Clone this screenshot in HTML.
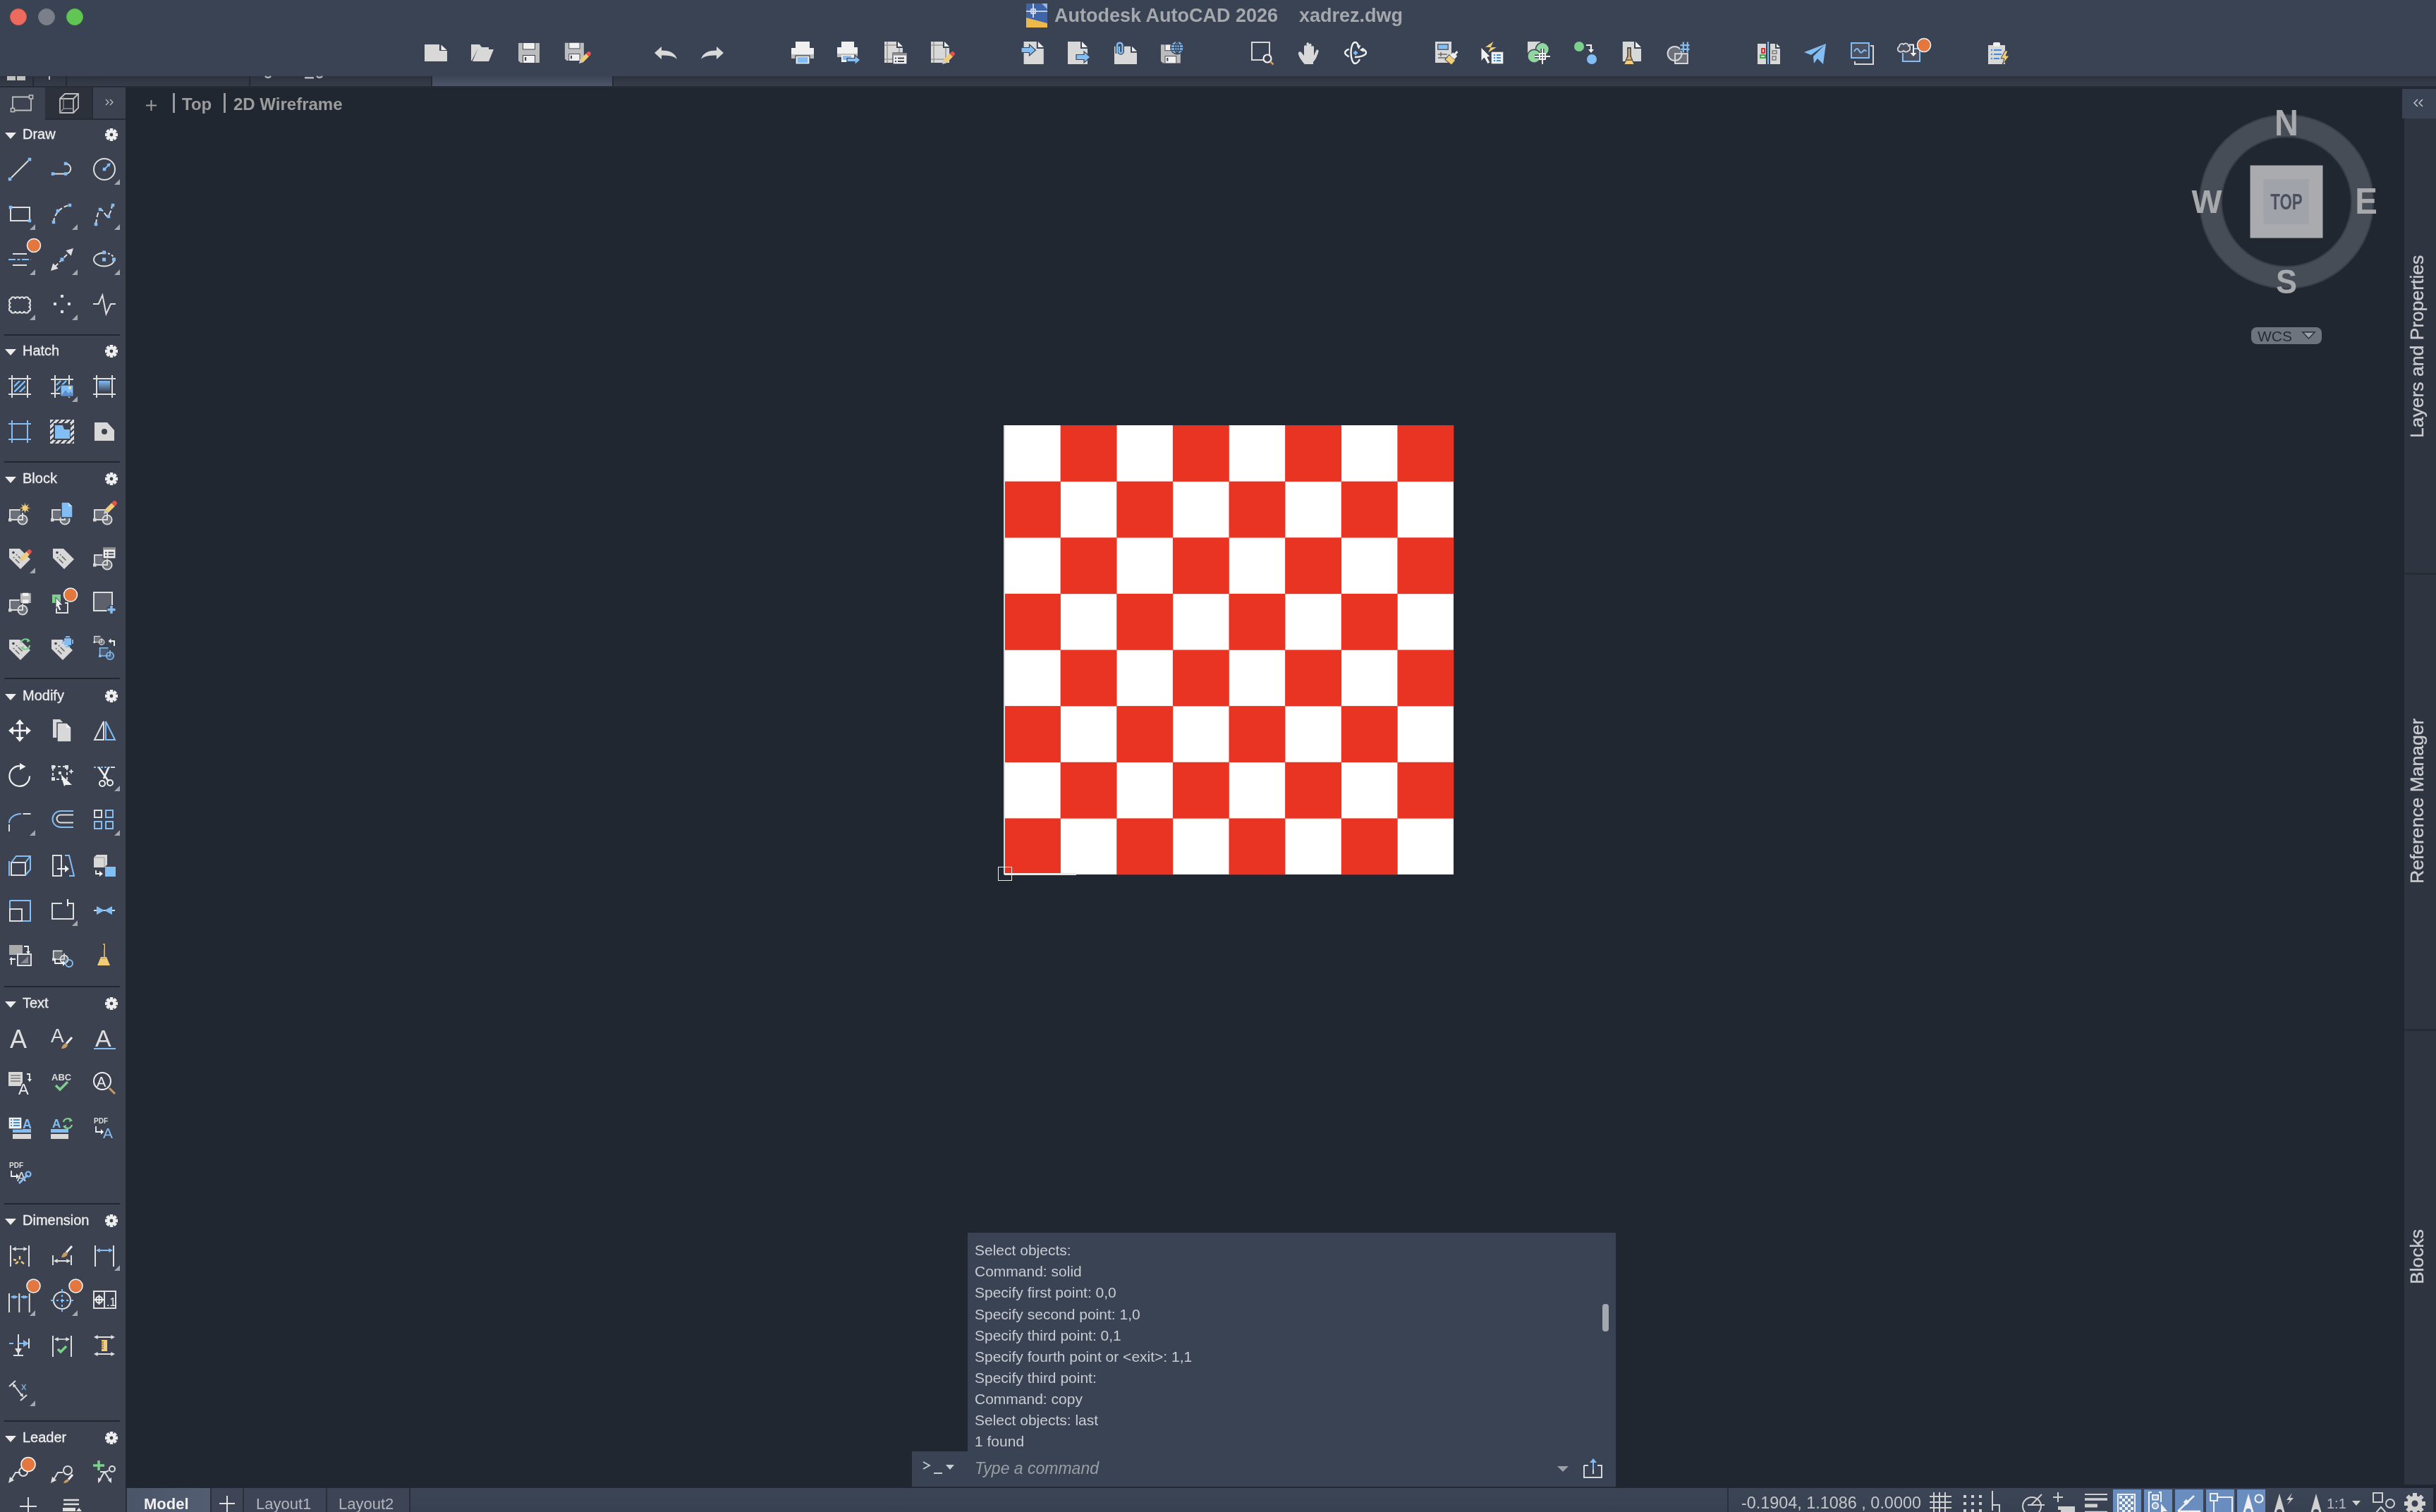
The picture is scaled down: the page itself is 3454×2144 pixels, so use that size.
<!DOCTYPE html>
<html><head><meta charset="utf-8"><style>
*{margin:0;padding:0;box-sizing:border-box}
html,body{width:3454px;height:2144px;overflow:hidden;background:#212730;font-family:"Liberation Sans",sans-serif}
body{will-change:transform}
.a{position:absolute}
svg.a{overflow:visible}
.tl{width:24px;height:24px;border-radius:50%;top:12px}
.hdr{color:#ececec;font-size:20px;-webkit-text-stroke:0.35px #ececec;left:32px;height:24px;line-height:24px;white-space:nowrap}
.tri{left:7px;width:0;height:0;border-left:8px solid transparent;border-right:8px solid transparent;border-top:9px solid #ececec}
.sep{left:6px;width:164px;height:2px;background:#22272f}
.vt{color:#c9cbcf;font-size:26.5px;-webkit-text-stroke:0.4px #c9cbcf;white-space:nowrap;transform-origin:0 0;transform:rotate(-90deg)}
.cl{left:1382px;color:#c9ccd3;font-size:21px;white-space:nowrap;height:30px;line-height:30px}
</style></head><body>
<div class="a" style="left:0;top:0;width:3454px;height:108px;background:#3a4353"></div>
<div class="a tl" style="left:14px;background:#ed6a5e;border:1px solid #d95a4e"></div>
<div class="a tl" style="left:54px;background:#7b7f89;border:1px solid #777b84"></div>
<div class="a tl" style="left:94px;background:#62c655;border:1px solid #55b848"></div>
<svg class="a" style="left:1455px;top:5px" width="30" height="34" viewBox="0 0 30 34"><rect x="0" y="0" width="30" height="34" fill="#3f64a8"/><path d="M22 0H30V8Z" fill="#9bb6e0"/><path d="M0 20L30 28V34H0Z" fill="#efb84a"/><path d="M10 0V20M0 11H30" stroke="#e8eef8" stroke-width="1.6"/><rect x="7" y="8" width="6" height="6" fill="none" stroke="#e8eef8" stroke-width="1.4"/></svg>
<div class="a" style="left:1495px;top:7px;font-size:27px;font-weight:bold;color:#a5a8ad;white-space:nowrap;line-height:normal">Autodesk AutoCAD 2026</div>
<div class="a" style="left:1842px;top:7px;font-size:27px;font-weight:bold;color:#a5a8ad;white-space:nowrap;line-height:normal">xadrez.dwg</div>
<svg class="a" style="left:602.0px;top:59.0px" width="32" height="32" viewBox="0 0 32 32"><path d="M0 4H21V13H32V28H0Z" fill="#d8d8d8"/><path d="M23.5 4.5L31.5 12H23.5Z" fill="#f0f0f0"/></svg>
<svg class="a" style="left:668.0px;top:59.0px" width="32" height="32" viewBox="0 0 32 32"><path d="M0 4H12L15 8H25V11H9L1 27H0Z" fill="#d8d8d8"/><path d="M2 28L9 11H32L25 28Z" fill="#d8d8d8"/></svg>
<svg class="a" style="left:734.0px;top:58.5px" width="32" height="32" viewBox="0 0 32 32"><g transform="translate(0 0) scale(1.0)"><path d="M1 2H31V30H4L1 27Z" fill="#bcbcbc"/><rect x="7" y="1.5" width="18" height="10" fill="#3c4250"/><rect x="8" y="2" width="16" height="8.5" fill="#f0f0f0"/><rect x="7" y="19" width="18" height="11" fill="#3c4250"/><rect x="8" y="20" width="16" height="10" fill="#f0f0f0"/><rect x="10" y="22" width="2.2" height="5" fill="#3c4250"/></g></svg>
<svg class="a" style="left:800.0px;top:59.0px" width="32" height="32" viewBox="0 0 32 32"><g transform="translate(0 0) scale(0.9)"><path d="M1 2H31V30H4L1 27Z" fill="#bcbcbc"/><rect x="7" y="1.5" width="18" height="10" fill="#3c4250"/><rect x="8" y="2" width="16" height="8.5" fill="#f0f0f0"/><rect x="7" y="19" width="18" height="11" fill="#3c4250"/><rect x="8" y="20" width="16" height="10" fill="#f0f0f0"/><rect x="10" y="22" width="2.2" height="5" fill="#3c4250"/></g><g transform="translate(21 31) rotate(-45) scale(0.85)"><path d="M0 0 L6 -3.5 V3.5 Z" fill="#cfcfcf"/><rect x="6" y="-3.5" width="14" height="7" fill="#f2cd78"/><path d="M20 -3.5 H23 A3.5 3.5 0 0 1 23 3.5 H20 Z" fill="#e8524a"/></g></svg>
<svg class="a" style="left:928.0px;top:59.0px" width="32" height="32" viewBox="0 0 32 32"><path d="M0 16L10 7V12.5C20 12.5 29 15 32 25C28 20.5 20 19.5 10 19.5V25Z" fill="#d8d8d8"/></svg>
<svg class="a" style="left:993.5px;top:59.0px" width="32" height="32" viewBox="0 0 32 32"><path d="M32 16L22 7V12.5C12 12.5 3 15 0 25C4 20.5 12 19.5 22 19.5V25Z" fill="#d8d8d8"/></svg>
<svg class="a" style="left:1121.5px;top:59.0px" width="32" height="32" viewBox="0 0 32 32"><rect x="6" y="0" width="20" height="9" fill="#f0f0f0"/><rect x="0" y="9" width="32" height="9" fill="#f0f0f0"/><rect x="0" y="18" width="32" height="6" fill="#bcbcbc"/><rect x="6" y="20" width="20" height="12" fill="#f0f0f0" stroke="#3c4250" stroke-width="1.2"/><rect x="8.5" y="22" width="15" height="8" fill="#82bdf3"/></svg>
<svg class="a" style="left:1187.0px;top:59.0px" width="32" height="32" viewBox="0 0 32 32"><rect x="6" y="0" width="18" height="8" fill="#f0f0f0"/><rect x="0" y="8" width="29" height="9" fill="#f0f0f0"/><rect x="0" y="17" width="29" height="5" fill="#bcbcbc"/><rect x="6" y="19" width="18" height="10" fill="#f0f0f0"/><rect x="8" y="20" width="12" height="6" fill="#82bdf3"/><path d="M14 23.5H25V19L33 26L25 33V28.5H14Z" fill="#82bdf3" stroke="#3c4250" stroke-width="1.2"/></svg>
<svg class="a" style="left:1254.0px;top:59.0px" width="32" height="32" viewBox="0 0 32 32"><path d="M0 0H17V9H26V30H0Z" fill="#d8d8d8"/><path d="M19 0L26 7H19Z" fill="#f0f0f0"/><path d="M4 0V30M21 9V30M0 5H17M0 25H26" stroke="#9a9a9a" stroke-width="1.6"/><rect x="12" y="16" width="20" height="16" fill="#f0f0f0" stroke="#3c4250" stroke-width="1.2"/><rect x="12" y="16" width="20" height="3.5" fill="#8d8d8d"/><path d="M15 23.5h2M19 23.5h9M15 28h2M19 28h9" stroke="#3c4250" stroke-width="2"/></svg>
<svg class="a" style="left:1320.0px;top:59.0px" width="32" height="32" viewBox="0 0 32 32"><path d="M0 0H17V9H26V30H0Z" fill="#d8d8d8"/><path d="M19 0L26 7H19Z" fill="#f0f0f0"/><path d="M4 0V30M21 9V30M0 5H17M0 25H26" stroke="#9a9a9a" stroke-width="1.6"/><g transform="translate(16 32) rotate(-45) scale(0.9)"><path d="M0 0 L6 -3.5 V3.5 Z" fill="#cfcfcf"/><rect x="6" y="-3.5" width="14" height="7" fill="#f2cd78"/><path d="M20 -3.5 H23 A3.5 3.5 0 0 1 23 3.5 H20 Z" fill="#e8524a"/></g></svg>
<svg class="a" style="left:1448.0px;top:59.0px" width="32" height="32" viewBox="0 0 32 32"><path d="M3.6 0H21.8V10H31.8V32H3.6Z" fill="#d8d8d8"/><path d="M23.8 0L31.8 8H23.8Z" fill="#f0f0f0"/><path d="M0 8.5H11.5V4L20.5 12L11.5 20V15.5H0Z" fill="#82bdf3" stroke="#3c4250" stroke-width="1.2"/></svg>
<svg class="a" style="left:1514.0px;top:59.0px" width="32" height="32" viewBox="0 0 32 32"><path d="M0 0H18V10H28V32H0Z" fill="#d8d8d8"/><path d="M20 0L28 8H20Z" fill="#f0f0f0"/><path d="M12 18.5H23V14L32 22L23 30V25.5H12Z" fill="#82bdf3" stroke="#3c4250" stroke-width="1.2"/></svg>
<svg class="a" style="left:1580.0px;top:59.0px" width="32" height="32" viewBox="0 0 32 32"><path d="M0 6.7H23V15.7H32V32.0H0Z" fill="#d8d8d8"/><path d="M25 6.7L32 13.7H25Z" fill="#f0f0f0"/><path d="M4 17V5A3.8 3.8 0 0 1 11.5 5V14A2.2 2.2 0 0 1 7 14V7" fill="none" stroke="#3c4250" stroke-width="5"/><path d="M4 17V5A3.8 3.8 0 0 1 11.5 5V14A2.2 2.2 0 0 1 7 14V7" fill="none" stroke="#82bdf3" stroke-width="2.4"/></svg>
<svg class="a" style="left:1646.0px;top:59.0px" width="32" height="32" viewBox="0 0 32 32"><g transform="translate(-1 2.5) scale(0.93)"><path d="M1 2H31V30H4L1 27Z" fill="#bcbcbc"/><rect x="7" y="1.5" width="18" height="10" fill="#3c4250"/><rect x="8" y="2" width="16" height="8.5" fill="#f0f0f0"/><rect x="7" y="19" width="18" height="11" fill="#3c4250"/><rect x="8" y="20" width="16" height="10" fill="#f0f0f0"/><rect x="10" y="22" width="2.2" height="5" fill="#3c4250"/></g><circle cx="23" cy="8.5" r="9.2" fill="#82bdf3" stroke="#3c4250" stroke-width="1.4"/><path d="M14 8.5H32M23 -0.5V17.5M15.5 4.5H30.5M15.5 12.5H30.5M23 -0.5C18.5 4 18.5 13 23 17.5M23 -0.5C27.5 4 27.5 13 23 17.5" fill="none" stroke="#3c4250" stroke-width="1.3"/></svg>
<svg class="a" style="left:1774.0px;top:59.0px" width="32" height="32" viewBox="0 0 32 32"><rect x="1" y="1" width="25" height="25" fill="none" stroke="#d8d8d8" stroke-width="2"/><circle cx="23" cy="24" r="5.5" fill="#3c4250" stroke="#f0f0f0" stroke-width="2.2"/><path d="M27 28L31.5 32.5" stroke="#d49a5a" stroke-width="2.5"/></svg>
<svg class="a" style="left:1840.0px;top:59.0px" width="32" height="32" viewBox="0 0 32 32"><path d="M10 32C6 28 2 22 1 18C0 15 3 13 5 15L9 20V7C9 4.5 12.5 4.5 12.5 7V15V3C12.5 0.5 16 0.5 16 3V15V4.5C16 2 19.5 2 19.5 4.5V16V8C19.5 5.5 23 5.5 23 8V20L26 13C27 10.5 30.5 11.5 29.5 14.5C28 19 26 25 22 29V32Z" fill="#d8d8d8"/></svg>
<svg class="a" style="left:1906.0px;top:59.0px" width="32" height="32" viewBox="0 0 32 32"><g fill="none" stroke="#f0f0f0" stroke-width="2.4"><path d="M6.7 10.6C3 12 1.1 14 1.1 15.8C1.1 17.6 3 19.6 6.7 21.4"/><path d="M22 25C20 29 18 31 15.5 31C12 31 9.5 24 9.5 15.8C9.5 7 12 1 15.5 1C17.5 1 19 3 20 5.5"/><path d="M15 22C22 22 31 19.5 31 15.8C31 13.5 29 12 26.7 10.6"/></g><path d="M17.5 5.2L23.5 5.2L20.5 11Z M21.8 11.8L27 8.5L27.8 15Z" fill="#f0f0f0"/><path d="M13 16H19M16 13V19" stroke="#82bdf3" stroke-width="2.4"/></svg>
<svg class="a" style="left:2035.0px;top:59.0px" width="32" height="32" viewBox="0 0 32 32"><rect x="0" y="0" width="23" height="30" fill="#d8d8d8"/><rect x="3" y="3" width="16" height="9" fill="#5a5f68"/><rect x="4.5" y="4.5" width="13" height="6" fill="#82bdf3"/><path d="M4 18H17M4 23H17M8 15V21" stroke="#6a6a6a" stroke-width="1.6"/><g transform="rotate(40 23 24)"><rect x="17" y="22" width="12" height="9" fill="#f2cd78" stroke="#3c4250" stroke-width="1"/><rect x="19" y="16" width="8" height="6" fill="#f0f0f0"/><rect x="21.5" y="11" width="3" height="6" fill="#f0f0f0"/></g></svg>
<svg class="a" style="left:2100.0px;top:59.0px" width="32" height="32" viewBox="0 0 32 32"><path d="M0 8V28L4.4 23L9.3 31.6L12.9 29.8L8.9 22L13.4 21.6Z" fill="#f0f0f0" stroke="#3c4250" stroke-width="1"/><path d="M17.5 0L6 7.8L14 7.5L10 15.5L21.8 8L13.5 8.3Z" fill="#f2cd78"/><rect x="14" y="14" width="18" height="18" fill="#f0f0f0" stroke="#3c4250" stroke-width="1.4"/><path d="M17.9 19h2.3M22 19h6M17.9 23h2.3M22 23h6M17.9 27h2.3M22 27h6" stroke="#3b8de0" stroke-width="2"/></svg>
<svg class="a" style="left:2166.0px;top:59.0px" width="32" height="32" viewBox="0 0 32 32"><path d="M0 0H18V18H0Z" fill="#d8d8d8"/><circle cx="21" cy="10.8" r="9.5" fill="#8fd6a0" stroke="#3c4250" stroke-width="1.6"/><circle cx="9.3" cy="20.7" r="9.5" fill="#8fd6a0" stroke="#3c4250" stroke-width="1.6"/><path d="M10 21H32M21 10V32" stroke="#3c4250" stroke-width="5"/><rect x="16" y="16" width="10" height="10" fill="#3c4250"/><path d="M10 21H32M21 10V32" stroke="#f0f0f0" stroke-width="2"/><rect x="17" y="17" width="8" height="8" fill="none" stroke="#f0f0f0" stroke-width="2"/></svg>
<svg class="a" style="left:2232.0px;top:59.0px" width="32" height="32" viewBox="0 0 32 32"><circle cx="7" cy="7" r="7" fill="#7ccf8c"/><circle cx="25" cy="25" r="7" fill="#82bdf3"/><path d="M17 5H24V12" fill="none" stroke="#f0f0f0" stroke-width="2.2"/><path d="M20 11H28L24 16Z" fill="#f0f0f0"/></svg>
<svg class="a" style="left:2298.0px;top:59.0px" width="32" height="32" viewBox="0 0 32 32"><path d="M2.8 0H19.0V10H29.0V28H2.8Z" fill="#d8d8d8"/><path d="M21.0 0L29.0 8H21.0Z" fill="#f0f0f0"/><path d="M9.2 8.1H14.8V20.3L19.6 32.5H4.4L9.2 20.3Z" fill="#3c4250"/><path d="M10.8 9.8H13.2V21.5H10.8Z M10.2 21.5H13.8L15.6 25.5H8.4Z" fill="#dcae6e"/><path d="M8 26.8H16L18.6 32H5.4Z" fill="#f2cd78"/></svg>
<svg class="a" style="left:2364.0px;top:59.0px" width="32" height="32" viewBox="0 0 32 32"><circle cx="10.6" cy="16.9" r="10" fill="#6b707b"/><rect x="11" y="17.2" width="17.8" height="13.8" fill="#6b707b"/><circle cx="10.6" cy="16.9" r="10" fill="none" stroke="#d8d8d8" stroke-width="2"/><rect x="11" y="17.2" width="17.8" height="13.8" fill="none" stroke="#d8d8d8" stroke-width="2"/><path d="M22.8 0V16M28.7 0V16M18 5.2H32M18 10.8H32" stroke="#3c4250" stroke-width="4.5"/><path d="M22.8 0.5V15.5M28.7 0.5V15.5M18.5 5.2H31.5M18.5 10.8H31.5" stroke="#82bdf3" stroke-width="2.2"/></svg>
<svg class="a" style="left:2492.0px;top:59.0px" width="32" height="32" viewBox="0 0 32 32"><rect x="0" y="3" width="12" height="29" fill="#d8d8d8"/><path d="M18 3H25V10H32V32H18Z" fill="#d8d8d8"/><path d="M27 3L32 8H27Z" fill="#f0f0f0"/><path d="M15 0V32" stroke="#82bdf3" stroke-width="2"/><rect x="6" y="10" width="4" height="6" fill="none" stroke="#e02020" stroke-width="1.8"/><rect x="4" y="19" width="7" height="4" fill="none" stroke="#2fa83a" stroke-width="1.8"/><rect x="21" y="13" width="6" height="4" fill="none" stroke="#8a8a8a" stroke-width="1.8"/><rect x="21" y="21" width="5" height="5" fill="none" stroke="#8a8a8a" stroke-width="1.8"/></svg>
<svg class="a" style="left:2558.0px;top:59.0px" width="32" height="32" viewBox="0 0 32 32"><path d="M0 15L31 3L27 32L19 24L14 31L13 21L29 5L10 19Z" fill="#82bdf3"/></svg>
<svg class="a" style="left:2624.0px;top:59.0px" width="32" height="32" viewBox="0 0 32 32"><rect x="1" y="2" width="25" height="21" fill="#4b5160" stroke="#82bdf3" stroke-width="2"/><path d="M5 14C8 9 10 9 12 13C14 17 16 16 18 13C20 11 22 13 22 14" fill="none" stroke="#82bdf3" stroke-width="2"/><path d="M28 6H32V32H6V28" fill="none" stroke="#d8d8d8" stroke-width="2"/></svg>
<svg class="a" style="left:2690.0px;top:59.0px" width="32" height="32" viewBox="0 0 32 32"><path d="M8 16V28H32V10H22.5" fill="none" stroke="#82bdf3" stroke-width="2.2"/><rect x="9" y="11" width="22" height="16" fill="#4b5160"/><path d="M3 14C0 13 0 8 3 7C3 3 7 2 9 4C12 1 16 3 16 6C19 6 19 12 16 13C14 15 11 15 9 13C7 15 4 15 3 14Z" fill="#4b5160" stroke="#d8d8d8" stroke-width="1.8"/><path d="M17 4.5H23V17" fill="none" stroke="#f0f0f0" stroke-width="2"/><path d="M18.5 16H27.5L23 21Z" fill="#f0f0f0"/></svg>
<svg class="a" style="left:2819.0px;top:59.0px" width="32" height="32" viewBox="0 0 32 32"><rect x="0" y="5" width="24" height="27" fill="#d8d8d8"/><rect x="7" y="1" width="10" height="6" rx="2" fill="#f0f0f0"/><path d="M4 12h2M8 12h11M4 18h2M8 18h11M4 24h2M8 24h8" stroke="#3b8de0" stroke-width="2"/><path d="M24 13L18 24H23L20 33L30 20H25L28 13Z" fill="#f2cd78" stroke="#3c4250" stroke-width="1"/></svg>
<svg class="a" style="left:2718.0px;top:54.0px" width="20" height="20" viewBox="0 0 20 20"><circle cx="10" cy="10" r="9.5" fill="#e4773e" stroke="#f4f4f4" stroke-width="1.6"/></svg>
<div class="a" style="left:0;top:108px;width:3454px;height:14px;background:linear-gradient(#2d333e,#363d4a)"></div>
<div class="a" style="left:611px;top:108px;width:257px;height:14px;background:linear-gradient(#3d4455,#4b566b)"></div>
<div class="a" style="left:46px;top:108px;width:2px;height:14px;background:#252a33"></div>
<div class="a" style="left:93px;top:108px;width:2px;height:14px;background:#252a33"></div>
<div class="a" style="left:353px;top:108px;width:2px;height:14px;background:#252a33"></div>
<div class="a" style="left:611px;top:108px;width:2px;height:14px;background:#252a33"></div>
<div class="a" style="left:868px;top:108px;width:2px;height:14px;background:#252a33"></div>
<div class="a" style="left:10px;top:108px;width:12px;height:6px;background:#bfbfbf"></div>
<div class="a" style="left:69px;top:108px;width:2px;height:5px;background:#bfbfbf"></div>
<div class="a" style="left:24px;top:108px;width:12px;height:6px;background:#bfbfbf"></div>
<svg class="a" style="left:370px;top:104px" width="100" height="12"><g fill="none" stroke="#b0b2b6" stroke-width="2.4"><path d="M6 4A5 5 0 0 0 14 4"/><path d="M79 4A5 5 0 0 0 87 4"/></g><rect x="62" y="5" width="13" height="2.6" fill="#b0b2b6"/></svg>
<div class="a" style="left:0;top:122px;width:3454px;height:2px;background:#262b34"></div>
<div class="a" style="left:0;top:124px;width:178px;height:2020px;background:#3c4250"></div>
<div class="a" style="left:64px;top:124px;width:66px;height:44px;background:#2c313c"></div>
<div class="a" style="left:130px;top:124px;width:2px;height:44px;background:#262b34"></div>
<div class="a" style="left:64px;top:168px;width:114px;height:2px;background:#262b34"></div>
<svg class="a" style="left:17.0px;top:133.0px" width="28" height="28" viewBox="0 0 28 28"><path d="M1 4.5H27V23.5H1Z" fill="none" stroke="#bdbdbd" stroke-width="1.8"/><rect x="-1.5" y="20.5" width="5" height="5" fill="#3c4250" stroke="#bdbdbd" stroke-width="1.6"/><rect x="24.5" y="2" width="5" height="5" fill="#3c4250" stroke="#bdbdbd" stroke-width="1.6"/></svg>
<svg class="a" style="left:84.0px;top:132.0px" width="28" height="28" viewBox="0 0 28 28"><path d="M1 8H20V28H1Z M1 8L8 1H27V21L20 28 M20 8L27 1" fill="none" stroke="#bdbdbd" stroke-width="1.8"/><path d="M6 6V22H20 M6 22L1 28" fill="none" stroke="#8d8d8d" stroke-width="1.4"/></svg>
<svg class="a" style="left:149.0px;top:140.0px" width="12" height="12" viewBox="0 0 12 12"><path d="M1 1L5 5L1 9M7 1L11 5L7 9" fill="none" stroke="#bdbdbd" stroke-width="1.3"/></svg>
<div class="a tri" style="top:188px"></div>
<div class="a hdr" style="top:178px">Draw</div>
<svg class="a" style="left:146.0px;top:179.0px" width="24" height="24" viewBox="0 0 24 24"><rect x="9.7" y="3" width="4.6" height="5" fill="#eeeeee" transform="rotate(0 12 12)"/><rect x="9.7" y="3" width="4.6" height="5" fill="#eeeeee" transform="rotate(45 12 12)"/><rect x="9.7" y="3" width="4.6" height="5" fill="#eeeeee" transform="rotate(90 12 12)"/><rect x="9.7" y="3" width="4.6" height="5" fill="#eeeeee" transform="rotate(135 12 12)"/><rect x="9.7" y="3" width="4.6" height="5" fill="#eeeeee" transform="rotate(180 12 12)"/><rect x="9.7" y="3" width="4.6" height="5" fill="#eeeeee" transform="rotate(225 12 12)"/><rect x="9.7" y="3" width="4.6" height="5" fill="#eeeeee" transform="rotate(270 12 12)"/><rect x="9.7" y="3" width="4.6" height="5" fill="#eeeeee" transform="rotate(315 12 12)"/><circle cx="12" cy="12" r="6.2" fill="#eeeeee"/><circle cx="12" cy="12" r="2.4" fill="#3c4250"/></svg>
<svg class="a" style="left:12.0px;top:224.0px" width="32" height="32" viewBox="0 0 32 32"><path d="M4 28L28 4" stroke="#dedede" stroke-width="2"/><rect x="-0.25" y="27.75" width="4.5" height="4.5" fill="#82bdf3"/><rect x="27.75" y="-0.25" width="4.5" height="4.5" fill="#82bdf3"/></svg>
<svg class="a" style="left:72.0px;top:224.0px" width="32" height="32" viewBox="0 0 32 32"><path d="M3 22.5H21A7.25 7.25 0 0 0 21 8" fill="none" stroke="#dedede" stroke-width="2"/><rect x="0.75" y="20.25" width="4.5" height="4.5" fill="#82bdf3"/><rect x="18.75" y="20.25" width="4.5" height="4.5" fill="#82bdf3"/><rect x="18.75" y="5.75" width="4.5" height="4.5" fill="#82bdf3"/></svg>
<svg class="a" style="left:132.0px;top:224.0px" width="32" height="32" viewBox="0 0 32 32"><circle cx="16" cy="16" r="15" fill="none" stroke="#dedede" stroke-width="2"/><path d="M16 16L23 9" stroke="#82bdf3" stroke-width="2"/><path d="M0 0L-5.6 -3.0L-5.6 3.0Z" fill="#82bdf3" transform="translate(25 7) rotate(-45)"/><rect x="13.75" y="13.75" width="4.5" height="4.5" fill="#82bdf3"/><path d="M38 30 V38 H30 Z" fill="#a4a7ab"/></svg>
<svg class="a" style="left:12.0px;top:288.0px" width="32" height="32" viewBox="0 0 32 32"><path d="M3 6H30V25H3Z" fill="none" stroke="#dedede" stroke-width="2"/><rect x="0.75" y="3.75" width="4.5" height="4.5" fill="#82bdf3"/><rect x="27.75" y="22.75" width="4.5" height="4.5" fill="#82bdf3"/><path d="M38 30 V38 H30 Z" fill="#a4a7ab"/></svg>
<svg class="a" style="left:72.0px;top:288.0px" width="32" height="32" viewBox="0 0 32 32"><path d="M4 27C5 15 14 5 27 3" fill="none" stroke="#dedede" stroke-width="2" stroke-dasharray="6 3"/><rect x="1.75" y="24.75" width="4.5" height="4.5" fill="#82bdf3"/><rect x="7.75" y="8.75" width="4.5" height="4.5" fill="#82bdf3"/><rect x="24.75" y="0.75" width="4.5" height="4.5" fill="#82bdf3"/><path d="M38 30 V38 H30 Z" fill="#a4a7ab"/></svg>
<svg class="a" style="left:132.0px;top:288.0px" width="32" height="32" viewBox="0 0 32 32"><path d="M4 30C5 20 7 12 10 9C13 8 15 14 20 19C24 16 26 10 27 3" fill="none" stroke="#dedede" stroke-width="2" stroke-dasharray="7 3"/><rect x="1.75" y="27.75" width="4.5" height="4.5" fill="#82bdf3"/><rect x="7.75" y="6.75" width="4.5" height="4.5" fill="#82bdf3"/><rect x="19.75" y="16.75" width="4.5" height="4.5" fill="#82bdf3"/><rect x="25.75" y="0.75" width="4.5" height="4.5" fill="#82bdf3"/><path d="M38 30 V38 H30 Z" fill="#a4a7ab"/></svg>
<svg class="a" style="left:12.0px;top:352.0px" width="32" height="32" viewBox="0 0 32 32"><path d="M6 8H26M6 24H26" stroke="#dedede" stroke-width="2"/><path d="M0 16H32" stroke="#82bdf3" stroke-width="2" stroke-dasharray="10 2.5 4 2.5"/><circle cx="36" cy="-4" r="9.5" fill="#e4773e" stroke="#f4f4f4" stroke-width="1.6"/><path d="M38 30 V38 H30 Z" fill="#a4a7ab"/></svg>
<svg class="a" style="left:72.0px;top:352.0px" width="32" height="32" viewBox="0 0 32 32"><path d="M6 26L26 6" stroke="#dedede" stroke-width="2" stroke-dasharray="6 3"/><path d="M0 0L-9.799999999999999 -5.25L-9.799999999999999 5.25Z" fill="#dedede" transform="translate(32 0) rotate(-45)"/><path d="M0 0L-9.799999999999999 -5.25L-9.799999999999999 5.25Z" fill="#dedede" transform="translate(0 32) rotate(135)"/><rect x="13.5" y="13.5" width="5" height="5" fill="#82bdf3"/><path d="M38 30 V38 H30 Z" fill="#a4a7ab"/></svg>
<svg class="a" style="left:132.0px;top:352.0px" width="32" height="32" viewBox="0 0 32 32"><path d="M30 16A14.5 9.5 0 1 1 15.5 6.5" fill="none" stroke="#dedede" stroke-width="2"/><path d="M15.5 6.5A14.5 9.5 0 0 1 30 16" fill="none" stroke="#dedede" stroke-width="2" stroke-dasharray="3 2.5"/><rect x="13.0" y="3.5" width="5" height="5" fill="#82bdf3"/><rect x="13.0" y="13.5" width="5" height="5" fill="#82bdf3"/><rect x="27.0" y="13.5" width="5" height="5" fill="#82bdf3"/><path d="M38 30 V38 H30 Z" fill="#a4a7ab"/></svg>
<svg class="a" style="left:12.0px;top:416.0px" width="32" height="32" viewBox="0 0 32 32"><path d="M3.5 8A3.125 2.8125 0 0 1 9.75 8A3.125 2.8125 0 0 1 16.00 8A3.125 2.8125 0 0 1 22.25 8A3.125 2.8125 0 0 1 28.50 8A2.5500000000000003 2.8333333333333335 0 0 1 28.5 13.67A2.5500000000000003 2.8333333333333335 0 0 1 28.5 19.33A2.5500000000000003 2.8333333333333335 0 0 1 28.5 25.00A3.125 2.8125 0 0 1 22.25 25A3.125 2.8125 0 0 1 16.00 25A3.125 2.8125 0 0 1 9.75 25A3.125 2.8125 0 0 1 3.50 25A2.5500000000000003 2.8333333333333335 0 0 1 3.5 19.33A2.5500000000000003 2.8333333333333335 0 0 1 3.5 13.67A2.5500000000000003 2.8333333333333335 0 0 1 3.5 8.00Z" fill="none" stroke="#dedede" stroke-width="2"/><path d="M38 30 V38 H30 Z" fill="#a4a7ab"/></svg>
<svg class="a" style="left:72.0px;top:416.0px" width="32" height="32" viewBox="0 0 32 32"><rect x="14" y="2" width="4" height="4" fill="#dedede"/><rect x="4" y="13" width="4" height="4" fill="#dedede"/><rect x="24" y="13" width="4" height="4" fill="#dedede"/><rect x="14" y="24" width="4" height="4" fill="#dedede"/><path d="M38 30 V38 H30 Z" fill="#a4a7ab"/></svg>
<svg class="a" style="left:132.0px;top:416.0px" width="32" height="32" viewBox="0 0 32 32"><path d="M0 15H7.7L13.3 2.6L18.5 29.2L25 15H32" fill="none" stroke="#dedede" stroke-width="2"/></svg>
<div class="a sep" style="top:474px"></div>
<div class="a tri" style="top:495px"></div>
<div class="a hdr" style="top:485px">Hatch</div>
<svg class="a" style="left:146.0px;top:486.0px" width="24" height="24" viewBox="0 0 24 24"><rect x="9.7" y="3" width="4.6" height="5" fill="#eeeeee" transform="rotate(0 12 12)"/><rect x="9.7" y="3" width="4.6" height="5" fill="#eeeeee" transform="rotate(45 12 12)"/><rect x="9.7" y="3" width="4.6" height="5" fill="#eeeeee" transform="rotate(90 12 12)"/><rect x="9.7" y="3" width="4.6" height="5" fill="#eeeeee" transform="rotate(135 12 12)"/><rect x="9.7" y="3" width="4.6" height="5" fill="#eeeeee" transform="rotate(180 12 12)"/><rect x="9.7" y="3" width="4.6" height="5" fill="#eeeeee" transform="rotate(225 12 12)"/><rect x="9.7" y="3" width="4.6" height="5" fill="#eeeeee" transform="rotate(270 12 12)"/><rect x="9.7" y="3" width="4.6" height="5" fill="#eeeeee" transform="rotate(315 12 12)"/><circle cx="12" cy="12" r="6.2" fill="#eeeeee"/><circle cx="12" cy="12" r="2.4" fill="#3c4250"/></svg>
<svg class="a" style="left:12.0px;top:532.0px" width="32" height="32" viewBox="0 0 32 32"><path d="M5 0V32M27 0V32M0 5H32M0 27H32" stroke="#dedede" stroke-width="2"/><clipPath id="hc"><rect x="8" y="8" width="16" height="16"/></clipPath><g clip-path="url(#hc)"><path d="M2 14L14 2M2 22L22 2M4 28L28 4M12 28L28 12M20 28L28 20" stroke="#82bdf3" stroke-width="2.4"/></g></svg>
<svg class="a" style="left:72.0px;top:532.0px" width="32" height="32" viewBox="0 0 32 32"><path d="M6 0V32M26 0V32M0 6H32M0 26H20" stroke="#dedede" stroke-width="2"/><path d="M8 22L22 8M8 14L14 8" stroke="#82bdf3" stroke-width="2.4"/><rect x="14" y="14" width="18" height="16" fill="#82bdf3" stroke="#3c4250" stroke-width="1.2"/><path d="M15 29L21 21L25 26L28 23L32 28V29Z" fill="#5b8fd0"/><circle cx="27" cy="18" r="2" fill="#f3e39a"/><path d="M38 30 V38 H30 Z" fill="#a4a7ab"/></svg>
<svg class="a" style="left:132.0px;top:532.0px" width="32" height="32" viewBox="0 0 32 32"><path d="M5 0V32M27 0V32M0 5H32M0 27H32" stroke="#dedede" stroke-width="2"/><defs><linearGradient id="gd" x1="0" y1="0" x2="0" y2="1"><stop offset="0" stop-color="#82bdf3"/><stop offset="1" stop-color="#3b4252"/></linearGradient></defs><rect x="8" y="8" width="16" height="16" fill="url(#gd)"/></svg>
<svg class="a" style="left:12.0px;top:596.0px" width="32" height="32" viewBox="0 0 32 32"><path d="M5 0V32M27 0V32M0 5H32M0 27H32" stroke="#82bdf3" stroke-width="2"/></svg>
<svg class="a" style="left:72.0px;top:596.0px" width="32" height="32" viewBox="0 0 32 32"><rect x="-1" y="-1" width="34" height="34" fill="#dedede"/><path d="M-1 6L6 -1M-1 14L14 -1M-1 22L22 -1M-1 30L30 -1M4 33L33 4M12 33L33 12M20 33L33 20M28 33L33 28" stroke="#3c4250" stroke-width="2.4"/><rect x="4" y="4" width="24" height="24" fill="#3c4250"/><path d="M6 7H17L19 13H27V26H6Z" fill="#82bdf3"/></svg>
<svg class="a" style="left:132.0px;top:596.0px" width="32" height="32" viewBox="0 0 32 32"><path d="M2 3H20L30 14V29H2Z" fill="#d8d8d8"/><circle cx="16" cy="16" r="4" fill="#3c4250"/></svg>
<div class="a sep" style="top:654px"></div>
<div class="a tri" style="top:676px"></div>
<div class="a hdr" style="top:666px">Block</div>
<svg class="a" style="left:146.0px;top:667.0px" width="24" height="24" viewBox="0 0 24 24"><rect x="9.7" y="3" width="4.6" height="5" fill="#eeeeee" transform="rotate(0 12 12)"/><rect x="9.7" y="3" width="4.6" height="5" fill="#eeeeee" transform="rotate(45 12 12)"/><rect x="9.7" y="3" width="4.6" height="5" fill="#eeeeee" transform="rotate(90 12 12)"/><rect x="9.7" y="3" width="4.6" height="5" fill="#eeeeee" transform="rotate(135 12 12)"/><rect x="9.7" y="3" width="4.6" height="5" fill="#eeeeee" transform="rotate(180 12 12)"/><rect x="9.7" y="3" width="4.6" height="5" fill="#eeeeee" transform="rotate(225 12 12)"/><rect x="9.7" y="3" width="4.6" height="5" fill="#eeeeee" transform="rotate(270 12 12)"/><rect x="9.7" y="3" width="4.6" height="5" fill="#eeeeee" transform="rotate(315 12 12)"/><circle cx="12" cy="12" r="6.2" fill="#eeeeee"/><circle cx="12" cy="12" r="2.4" fill="#3c4250"/></svg>
<svg class="a" style="left:12.0px;top:712.0px" width="32" height="32" viewBox="0 0 32 32"><g transform="translate(0 0) scale(1.0)"><path d="M2 11H17V25H2Z" fill="#6b707b"/><path d="M17 11H2V25H13.5" fill="none" stroke="#d8d8d8" stroke-width="2"/><circle cx="20" cy="25" r="6.6" fill="#6b707b" stroke="#d8d8d8" stroke-width="2"/><path d="M20 15V25H13.5" stroke="#d8d8d8" stroke-width="2" fill="none"/><rect x="0" y="23" width="4.5" height="4.5" fill="#d8d8d8"/></g><path d="M23.50 -0.20L24.95 4.89L29.58 2.32L27.01 6.95L32.10 8.40L27.01 9.85L29.58 14.48L24.95 11.91L23.50 17.00L22.05 11.91L17.42 14.48L19.99 9.85L14.90 8.40L19.99 6.95L17.42 2.32L22.05 4.89Z" fill="#f2cd78" stroke="#3c4250" stroke-width="0.7"/></svg>
<svg class="a" style="left:72.0px;top:712.0px" width="32" height="32" viewBox="0 0 32 32"><g transform="translate(0 0) scale(1.0)"><path d="M2 11H17V25H2Z" fill="#6b707b"/><path d="M17 11H2V25H13.5" fill="none" stroke="#d8d8d8" stroke-width="2"/><circle cx="20" cy="25" r="6.6" fill="#6b707b" stroke="#d8d8d8" stroke-width="2"/><path d="M20 15V25H13.5" stroke="#d8d8d8" stroke-width="2" fill="none"/><rect x="0" y="23" width="4.5" height="4.5" fill="#d8d8d8"/></g><path d="M15 0H25L31 6V22H15Z" fill="#82bdf3" stroke="#3c4250" stroke-width="1.4"/><path d="M25 0.5L30.5 6H25Z" fill="#c4e0fb"/></svg>
<svg class="a" style="left:132.0px;top:712.0px" width="32" height="32" viewBox="0 0 32 32"><g transform="translate(0 0) scale(1.0)"><path d="M2 11H17V25H2Z" fill="#6b707b"/><path d="M17 11H2V25H13.5" fill="none" stroke="#d8d8d8" stroke-width="2"/><circle cx="20" cy="25" r="6.6" fill="#6b707b" stroke="#d8d8d8" stroke-width="2"/><path d="M20 15V25H13.5" stroke="#d8d8d8" stroke-width="2" fill="none"/><rect x="0" y="23" width="4.5" height="4.5" fill="#d8d8d8"/></g><g transform="translate(15 17) rotate(-45) scale(0.95)"><path d="M0 0 L6 -3.5 V3.5 Z" fill="#cfcfcf"/><rect x="6" y="-3.5" width="14" height="7" fill="#f2cd78"/><path d="M20 -3.5 H23 A3.5 3.5 0 0 1 23 3.5 H20 Z" fill="#e8524a"/></g></svg>
<svg class="a" style="left:12.0px;top:775.0px" width="32" height="32" viewBox="0 0 32 32"><path d="M1 3H16L31 18L17 32L1 16Z" fill="#d8d8d8"/><circle cx="7" cy="8.5" r="1.8" fill="#3c4250"/><path d="M11 11L22 22M7 15L18 26" stroke="#6a6a6a" stroke-width="1.6" stroke-dasharray="2 2 8 30"/><g transform="translate(15 22) rotate(-45) scale(0.9)"><path d="M0 0 L6 -3.5 V3.5 Z" fill="#cfcfcf"/><rect x="6" y="-3.5" width="14" height="7" fill="#f2cd78"/><path d="M20 -3.5 H23 A3.5 3.5 0 0 1 23 3.5 H20 Z" fill="#e8524a"/></g><path d="M38 30 V38 H30 Z" fill="#a4a7ab"/></svg>
<svg class="a" style="left:72.0px;top:775.0px" width="32" height="32" viewBox="0 0 32 32"><path d="M3 3H18L33 18L19 32L3 16Z" fill="#d8d8d8"/><circle cx="9" cy="8.5" r="1.8" fill="#3c4250"/><path d="M13 11L24 22M9 15L20 26" stroke="#6a6a6a" stroke-width="1.6" stroke-dasharray="2 2 8 30"/></svg>
<svg class="a" style="left:132.0px;top:775.0px" width="32" height="32" viewBox="0 0 32 32"><g transform="translate(0 1) scale(1.0)"><path d="M2 11H17V25H2Z" fill="#6b707b"/><path d="M17 11H2V25H13.5" fill="none" stroke="#d8d8d8" stroke-width="2"/><circle cx="20" cy="25" r="6.6" fill="#6b707b" stroke="#d8d8d8" stroke-width="2"/><path d="M20 15V25H13.5" stroke="#d8d8d8" stroke-width="2" fill="none"/><rect x="0" y="23" width="4.5" height="4.5" fill="#d8d8d8"/></g><rect x="14" y="1" width="18" height="16" fill="#f0f0f0" stroke="#3c4250" stroke-width="1.2"/><rect x="14" y="1" width="18" height="3.5" fill="#8d8d8d"/><path d="M17 8.5h2.5M21.5 8.5h8M17 12.5h2.5M21.5 12.5h8" stroke="#3c4250" stroke-width="1.8"/></svg>
<svg class="a" style="left:12.0px;top:839.0px" width="32" height="32" viewBox="0 0 32 32"><g transform="translate(0 1) scale(1.0)"><path d="M2 11H17V25H2Z" fill="#6b707b"/><path d="M17 11H2V25H13.5" fill="none" stroke="#d8d8d8" stroke-width="2"/><circle cx="20" cy="25" r="6.6" fill="#6b707b" stroke="#d8d8d8" stroke-width="2"/><path d="M20 15V25H13.5" stroke="#d8d8d8" stroke-width="2" fill="none"/><rect x="0" y="23" width="4.5" height="4.5" fill="#d8d8d8"/></g><g transform="translate(15.8 0.7) scale(0.53)"><path d="M1 2H31V30H4L1 27Z" fill="#bcbcbc" stroke="#3c4250" stroke-width="2"/><rect x="8" y="2" width="16" height="8.5" fill="#f0f0f0"/><rect x="8" y="20" width="16" height="10" fill="#f0f0f0"/></g></svg>
<svg class="a" style="left:72.0px;top:839.0px" width="32" height="32" viewBox="0 0 32 32"><rect x="2" y="4" width="12" height="12" fill="#7ccf8c"/><path d="M8 14V30H24V16H20" fill="none" stroke="#dedede" stroke-width="2"/><path d="M7 8L17 19H12L15 26L12 27L9 21L7 24Z" fill="#f0f0f0" stroke="#3c4250" stroke-width="1"/><circle cx="28" cy="4.5" r="9.5" fill="#e4773e" stroke="#f4f4f4" stroke-width="1.6"/></svg>
<svg class="a" style="left:132.0px;top:839.0px" width="32" height="32" viewBox="0 0 32 32"><rect x="1" y="1" width="26" height="26" fill="#5c616b" stroke="#dedede" stroke-width="2"/><path d="M26 19V32M19.5 25.5H32.5" stroke="#3c4250" stroke-width="7"/><path d="M26 20V31M20.5 25.5H31.5" stroke="#82bdf3" stroke-width="3.5"/></svg>
<svg class="a" style="left:12.0px;top:902.0px" width="32" height="32" viewBox="0 0 32 32"><path d="M1 5H16L31 20L17 34L1 18Z" fill="#d8d8d8"/><circle cx="7" cy="10.5" r="1.8" fill="#3c4250"/><path d="M11 13L22 24M7 17L18 28" stroke="#6a6a6a" stroke-width="1.6" stroke-dasharray="2 2 8 30"/><path d="M18 10A6 6 0 0 1 29 7M30 13A6 6 0 0 1 19 16" fill="none" stroke="#7ccf8c" stroke-width="2.2"/><path d="M27 3L31 7L26 9Z" fill="#7ccf8c"/><path d="M21 20L17 16L22 14Z" fill="#7ccf8c"/></svg>
<svg class="a" style="left:72.0px;top:902.0px" width="32" height="32" viewBox="0 0 32 32"><path d="M1 5H16L31 20L17 34L1 18Z" fill="#d8d8d8"/><circle cx="7" cy="10.5" r="1.8" fill="#3c4250"/><path d="M11 13L22 24M7 17L18 28" stroke="#6a6a6a" stroke-width="1.6" stroke-dasharray="2 2 8 30"/><rect x="19" y="3" width="10" height="10" fill="#82bdf3"/><path d="M17 5V11M31 5V11M21 1H27M21 15H27" stroke="#82bdf3" stroke-width="1.8"/></svg>
<svg class="a" style="left:132.0px;top:902.0px" width="32" height="32" viewBox="0 0 32 32"><g transform="translate(0.5 -6) scale(0.58)"><path d="M2 11H17V25H2Z" fill="#6b707b"/><path d="M17 11H2V25H13.5" fill="none" stroke="#dedede" stroke-width="2"/><circle cx="20" cy="25" r="6.6" fill="#6b707b" stroke="#dedede" stroke-width="2"/><path d="M20 15V25H13.5" stroke="#dedede" stroke-width="2" fill="none"/><rect x="0" y="23" width="4.5" height="4.5" fill="#dedede"/></g><path d="M30 14V7H25" fill="none" stroke="#f0f0f0" stroke-width="2"/><path d="M21.5 7L25.5 3.5V10.5Z" fill="#f0f0f0"/><g transform="translate(8 8) scale(0.8)"><path d="M2 11H17V25H2Z" fill="#4b5a72"/><path d="M17 11H2V25H13.5" fill="none" stroke="#82bdf3" stroke-width="2"/><circle cx="20" cy="25" r="6.6" fill="#4b5a72" stroke="#82bdf3" stroke-width="2"/><path d="M20 15V25H13.5" stroke="#82bdf3" stroke-width="2" fill="none"/><rect x="0" y="23" width="4.5" height="4.5" fill="#82bdf3"/></g></svg>
<div class="a sep" style="top:961px"></div>
<div class="a tri" style="top:984px"></div>
<div class="a hdr" style="top:974px">Modify</div>
<svg class="a" style="left:146.0px;top:975.0px" width="24" height="24" viewBox="0 0 24 24"><rect x="9.7" y="3" width="4.6" height="5" fill="#eeeeee" transform="rotate(0 12 12)"/><rect x="9.7" y="3" width="4.6" height="5" fill="#eeeeee" transform="rotate(45 12 12)"/><rect x="9.7" y="3" width="4.6" height="5" fill="#eeeeee" transform="rotate(90 12 12)"/><rect x="9.7" y="3" width="4.6" height="5" fill="#eeeeee" transform="rotate(135 12 12)"/><rect x="9.7" y="3" width="4.6" height="5" fill="#eeeeee" transform="rotate(180 12 12)"/><rect x="9.7" y="3" width="4.6" height="5" fill="#eeeeee" transform="rotate(225 12 12)"/><rect x="9.7" y="3" width="4.6" height="5" fill="#eeeeee" transform="rotate(270 12 12)"/><rect x="9.7" y="3" width="4.6" height="5" fill="#eeeeee" transform="rotate(315 12 12)"/><circle cx="12" cy="12" r="6.2" fill="#eeeeee"/><circle cx="12" cy="12" r="2.4" fill="#3c4250"/></svg>
<svg class="a" style="left:12.0px;top:1020.0px" width="32" height="32" viewBox="0 0 32 32"><path d="M16 5V27M5 16H27" stroke="#f0f0f0" stroke-width="2.6"/><path d="M16 0L10 7H22Z M16 32L10 25H22Z M0 16L7 10V22Z M32 16L25 10V22Z" fill="#f0f0f0"/></svg>
<svg class="a" style="left:72.0px;top:1020.0px" width="32" height="32" viewBox="0 0 32 32"><path d="M3 0H13L17 4V26H3Z" fill="#d8d8d8"/><path d="M9 5H22L29 12V32H9Z" fill="#d8d8d8" stroke="#3c4250" stroke-width="1.5"/><path d="M22 5.5L28.5 12H22Z" fill="#f0f0f0"/></svg>
<svg class="a" style="left:132.0px;top:1020.0px" width="32" height="32" viewBox="0 0 32 32"><path d="M15 3L2 29H15Z" fill="none" stroke="#dedede" stroke-width="2"/><path d="M18 3L31 29H18Z" fill="none" stroke="#82bdf3" stroke-width="2"/></svg>
<svg class="a" style="left:12.0px;top:1084.0px" width="32" height="32" viewBox="0 0 32 32"><path d="M30 16.5A14.3 14.3 0 1 1 15.8 2.2" fill="none" stroke="#f0f0f0" stroke-width="2.2"/><path d="M16 -2L24.5 3L16 8Z" fill="#f0f0f0"/></svg>
<svg class="a" style="left:72.0px;top:1084.0px" width="32" height="32" viewBox="0 0 32 32"><rect x="3" y="3" width="20" height="18" fill="none" stroke="#dedede" stroke-width="2" stroke-dasharray="4 3"/><rect x="1" y="1" width="5" height="5" fill="#dedede"/><rect x="20" y="1" width="5" height="5" fill="#dedede"/><rect x="1" y="18" width="5" height="5" fill="#dedede"/><rect x="11" y="10" width="4" height="4" fill="#dedede"/><path d="M14 14L30 29H21L19 31Z" fill="#f0f0f0"/><path d="M26 10H32M29 7V13" stroke="#f0f0f0" stroke-width="1.6"/></svg>
<svg class="a" style="left:132.0px;top:1084.0px" width="32" height="32" viewBox="0 0 32 32"><path d="M1 4H31" stroke="#82bdf3" stroke-width="2" stroke-dasharray="3 2"/><path d="M25 4H31" stroke="#dedede" stroke-width="2"/><path d="M8 4L22 24M22 4L15 20" stroke="#f0f0f0" stroke-width="2.6"/><circle cx="13" cy="27" r="4" fill="none" stroke="#f0f0f0" stroke-width="2"/><circle cx="24" cy="26" r="4" fill="none" stroke="#f0f0f0" stroke-width="2"/><path d="M38 30 V38 H30 Z" fill="#a4a7ab"/></svg>
<svg class="a" style="left:12.0px;top:1147.0px" width="32" height="32" viewBox="0 0 32 32"><path d="M1 32V22" stroke="#dedede" stroke-width="2"/><path d="M1 20A17 13 0 0 1 18 7" fill="none" stroke="#82bdf3" stroke-width="2"/><path d="M20.5 7H31.6" stroke="#dedede" stroke-width="2"/><path d="M38 30 V38 H30 Z" fill="#a4a7ab"/></svg>
<svg class="a" style="left:72.0px;top:1147.0px" width="32" height="32" viewBox="0 0 32 32"><path d="M32 3H14A11.5 11.5 0 0 0 14 26H32" fill="none" stroke="#82bdf3" stroke-width="2"/><path d="M32 8.5H14A5.5 5.5 0 0 0 14 19.5H32" fill="none" stroke="#dedede" stroke-width="2"/></svg>
<svg class="a" style="left:132.0px;top:1147.0px" width="32" height="32" viewBox="0 0 32 32"><rect x="2" y="2" width="10" height="10" fill="none" stroke="#dedede" stroke-width="2"/><rect x="18" y="2" width="10" height="10" fill="none" stroke="#82bdf3" stroke-width="2"/><rect x="2" y="18" width="10" height="10" fill="none" stroke="#82bdf3" stroke-width="2"/><rect x="18" y="18" width="10" height="10" fill="none" stroke="#82bdf3" stroke-width="2"/><path d="M38 30 V38 H30 Z" fill="#a4a7ab"/></svg>
<svg class="a" style="left:12.0px;top:1211.0px" width="32" height="32" viewBox="0 0 32 32"><path d="M4 12H24V30H4Z" fill="none" stroke="#dedede" stroke-width="2"/><path d="M1 10V31M4 12L11 3H31V22L24 30M24 12L31 3" fill="none" stroke="#82bdf3" stroke-width="2"/></svg>
<svg class="a" style="left:72.0px;top:1211.0px" width="32" height="32" viewBox="0 0 32 32"><path d="M3 2H15V31H3Z" fill="none" stroke="#dedede" stroke-width="2"/><path d="M20 2H26L33 31H26" fill="none" stroke="#82bdf3" stroke-width="2"/><path d="M9 21H22" stroke="#f0f0f0" stroke-width="2"/><path d="M26 21L20 16V26Z" fill="#f0f0f0"/></svg>
<svg class="a" style="left:132.0px;top:1211.0px" width="32" height="32" viewBox="0 0 32 32"><path d="M1 5L5 1H20V15L16 19H1Z" fill="#d8d8d8"/><path d="M1 5H16V19" fill="none" stroke="#9c9c9c" stroke-width="1"/><rect x="17" y="18" width="15" height="14" fill="#82bdf3"/><path d="M4 23V28H10" fill="none" stroke="#f0f0f0" stroke-width="1.8"/><path d="M14 28L9 24V32Z" fill="#f0f0f0"/></svg>
<svg class="a" style="left:12.0px;top:1275.0px" width="32" height="32" viewBox="0 0 32 32"><path d="M2 2H31V31H19" fill="none" stroke="#82bdf3" stroke-width="2"/><path d="M2 2V14" stroke="#82bdf3" stroke-width="2"/><rect x="2" y="14" width="17" height="17" fill="none" stroke="#dedede" stroke-width="2"/></svg>
<svg class="a" style="left:72.0px;top:1275.0px" width="32" height="32" viewBox="0 0 32 32"><path d="M16 6H2V28H32V6H24" fill="none" stroke="#dedede" stroke-width="2"/><path d="M24 0V10" stroke="#f0f0f0" stroke-width="2"/><path d="M38 30 V38 H30 Z" fill="#a4a7ab"/></svg>
<svg class="a" style="left:132.0px;top:1275.0px" width="32" height="32" viewBox="0 0 32 32"><path d="M1 16H31" stroke="#dedede" stroke-width="2"/><path d="M16 16L5 10V22Z M16 16L27 10V22Z" fill="#82bdf3"/></svg>
<svg class="a" style="left:12.0px;top:1339.0px" width="32" height="32" viewBox="0 0 32 32"><rect x="1" y="1" width="19" height="14" fill="#aaaaaa"/><rect x="13" y="14" width="19" height="16" fill="#4b5160" stroke="#dedede" stroke-width="2"/><path d="M17 27L28 17V27Z" fill="#8a8a8a"/><path d="M22 3H28V11M4 29V21H10" fill="none" stroke="#f0f0f0" stroke-width="1.8"/><path d="M25 10H31L28 14Z M1 22L4 18L7 22Z" fill="#f0f0f0"/></svg>
<svg class="a" style="left:72.0px;top:1339.0px" width="32" height="32" viewBox="0 0 32 32"><g transform="translate(2 0) scale(0.85)"><path d="M2 11H17V25H2Z" fill="#6a6f78"/><path d="M17 11H2V25H13.5" fill="none" stroke="#dedede" stroke-width="2"/><circle cx="20" cy="25" r="6.6" fill="#6a6f78" stroke="#dedede" stroke-width="2"/><path d="M20 15V25H13.5" stroke="#dedede" stroke-width="2" fill="none"/><rect x="0" y="23" width="4.5" height="4.5" fill="#dedede"/></g><path d="M6 20V27H17" fill="none" stroke="#f0f0f0" stroke-width="1.8"/><path d="M17 23L21 27L17 31Z" fill="#f0f0f0"/><circle cx="26" cy="27" r="5" fill="none" stroke="#82bdf3" stroke-width="2"/></svg>
<svg class="a" style="left:132.0px;top:1339.0px" width="32" height="32" viewBox="0 0 32 32"><path d="M14 0H16V19" stroke="#c9a36a" stroke-width="2"/><path d="M11 18H19L24 30H6Z" fill="#f2cd78"/><path d="M12 20H18" stroke="#c9a36a" stroke-width="1.6"/></svg>
<div class="a sep" style="top:1398px"></div>
<div class="a tri" style="top:1420px"></div>
<div class="a hdr" style="top:1410px">Text</div>
<svg class="a" style="left:146.0px;top:1411.0px" width="24" height="24" viewBox="0 0 24 24"><rect x="9.7" y="3" width="4.6" height="5" fill="#eeeeee" transform="rotate(0 12 12)"/><rect x="9.7" y="3" width="4.6" height="5" fill="#eeeeee" transform="rotate(45 12 12)"/><rect x="9.7" y="3" width="4.6" height="5" fill="#eeeeee" transform="rotate(90 12 12)"/><rect x="9.7" y="3" width="4.6" height="5" fill="#eeeeee" transform="rotate(135 12 12)"/><rect x="9.7" y="3" width="4.6" height="5" fill="#eeeeee" transform="rotate(180 12 12)"/><rect x="9.7" y="3" width="4.6" height="5" fill="#eeeeee" transform="rotate(225 12 12)"/><rect x="9.7" y="3" width="4.6" height="5" fill="#eeeeee" transform="rotate(270 12 12)"/><rect x="9.7" y="3" width="4.6" height="5" fill="#eeeeee" transform="rotate(315 12 12)"/><circle cx="12" cy="12" r="6.2" fill="#eeeeee"/><circle cx="12" cy="12" r="2.4" fill="#3c4250"/></svg>
<svg class="a" style="left:12.0px;top:1456.0px" width="32" height="32" viewBox="0 0 32 32"><text x="2" y="30" font-family="Liberation Sans" font-size="36" fill="#dedede" font-weight="normal">A</text></svg>
<svg class="a" style="left:72.0px;top:1456.0px" width="32" height="32" viewBox="0 0 32 32"><text x="0" y="22" font-family="Liberation Sans" font-size="28" fill="#dedede" font-weight="normal">A</text><path d="M30 15L22 24" stroke="#f0f0f0" stroke-width="3"/><path d="M22 23C18 24 16 27 15 31C20 31 23 29 24 26Z" fill="#c79a63"/></svg>
<svg class="a" style="left:132.0px;top:1456.0px" width="32" height="32" viewBox="0 0 32 32"><text x="3" y="28" font-family="Liberation Sans" font-size="34" fill="#dedede" font-weight="normal">A</text><path d="M1 31H32" stroke="#82bdf3" stroke-width="2"/></svg>
<svg class="a" style="left:12.0px;top:1520.0px" width="32" height="32" viewBox="0 0 32 32"><rect x="0" y="0" width="20" height="20" fill="#d8d8d8"/><path d="M3 5H17M3 9H17M3 13H17" stroke="#777" stroke-width="1.6"/><text x="14" y="32" font-family="Liberation Sans" font-size="22" fill="#3c4250" stroke="#3c4250" stroke-width="3">A</text><text x="14" y="32" font-family="Liberation Sans" font-size="22" fill="#f0f0f0" font-weight="normal">A</text><path d="M26 3H30V10" fill="none" stroke="#f0f0f0" stroke-width="1.8"/><path d="M27 10H33L30 14Z" fill="#f0f0f0"/></svg>
<svg class="a" style="left:72.0px;top:1520.0px" width="32" height="32" viewBox="0 0 32 32"><text x="1" y="12" font-family="Liberation Sans" font-size="13" fill="#dedede" font-weight="bold">ABC</text><path d="M7 19L13 25L24 14" fill="none" stroke="#7ccf8c" stroke-width="3.5"/></svg>
<svg class="a" style="left:132.0px;top:1520.0px" width="32" height="32" viewBox="0 0 32 32"><circle cx="13" cy="13" r="12" fill="none" stroke="#f0f0f0" stroke-width="2"/><text x="5" y="21" font-family="Liberation Sans" font-size="20" fill="#f0f0f0" font-weight="normal">A</text><path d="M23 23L31 31" stroke="#c79a63" stroke-width="3"/></svg>
<svg class="a" style="left:12.0px;top:1583.0px" width="32" height="32" viewBox="0 0 32 32"><rect x="6" y="18" width="26" height="5" fill="#82bdf3"/><rect x="6" y="25" width="26" height="7" fill="#d8d8d8"/><rect x="0" y="1" width="19" height="17" fill="#f0f0f0" stroke="#3c4250" stroke-width="1.4"/><path d="M3 5h2M7 5h9M3 9h2M7 9h9M3 13h2M7 13h9" stroke="#3b8de0" stroke-width="1.8"/><text x="20" y="17" font-family="Liberation Sans" font-size="18" fill="#82bdf3" font-weight="bold">A</text></svg>
<svg class="a" style="left:72.0px;top:1583.0px" width="32" height="32" viewBox="0 0 32 32"><rect x="0" y="18" width="25" height="5" fill="#82bdf3"/><rect x="0" y="25" width="25" height="7" fill="#d8d8d8"/><text x="2" y="16" font-family="Liberation Sans" font-size="17" fill="#82bdf3" font-weight="bold">A</text><path d="M18 8A6 6 0 0 1 29 6M30 12A6 6 0 0 1 19 14" fill="none" stroke="#7ccf8c" stroke-width="2.2"/><path d="M27 2L31 6L26 8Z M21 18L17 14L22 12Z" fill="#7ccf8c"/></svg>
<svg class="a" style="left:132.0px;top:1583.0px" width="32" height="32" viewBox="0 0 32 32"><text x="1" y="10" font-family="Liberation Sans" font-size="10" fill="#dedede" font-weight="bold">PDF</text><path d="M4 14V22H11" fill="none" stroke="#f0f0f0" stroke-width="1.8"/><path d="M11 18L15 22L11 26Z" fill="#f0f0f0"/><text x="14" y="31" font-family="Liberation Sans" font-size="21" fill="#82bdf3" font-weight="normal">A</text></svg>
<svg class="a" style="left:12.0px;top:1646.0px" width="32" height="32" viewBox="0 0 32 32"><text x="1" y="10" font-family="Liberation Sans" font-size="10" fill="#dedede" font-weight="bold">PDF</text><path d="M4 14V22H11" fill="none" stroke="#f0f0f0" stroke-width="1.8"/><path d="M11 18L15 22L11 26Z" fill="#f0f0f0"/><text x="12" y="29" font-family="Liberation Sans" font-size="19" fill="#dedede" font-weight="normal">A</text><path d="M15 32L27 20" stroke="#82bdf3" stroke-width="3"/><circle cx="28" cy="19" r="3.5" fill="none" stroke="#82bdf3" stroke-width="2.2"/></svg>
<div class="a sep" style="top:1706px"></div>
<div class="a tri" style="top:1728px"></div>
<div class="a hdr" style="top:1718px">Dimension</div>
<svg class="a" style="left:146.0px;top:1719.0px" width="24" height="24" viewBox="0 0 24 24"><rect x="9.7" y="3" width="4.6" height="5" fill="#eeeeee" transform="rotate(0 12 12)"/><rect x="9.7" y="3" width="4.6" height="5" fill="#eeeeee" transform="rotate(45 12 12)"/><rect x="9.7" y="3" width="4.6" height="5" fill="#eeeeee" transform="rotate(90 12 12)"/><rect x="9.7" y="3" width="4.6" height="5" fill="#eeeeee" transform="rotate(135 12 12)"/><rect x="9.7" y="3" width="4.6" height="5" fill="#eeeeee" transform="rotate(180 12 12)"/><rect x="9.7" y="3" width="4.6" height="5" fill="#eeeeee" transform="rotate(225 12 12)"/><rect x="9.7" y="3" width="4.6" height="5" fill="#eeeeee" transform="rotate(270 12 12)"/><rect x="9.7" y="3" width="4.6" height="5" fill="#eeeeee" transform="rotate(315 12 12)"/><circle cx="12" cy="12" r="6.2" fill="#eeeeee"/><circle cx="12" cy="12" r="2.4" fill="#3c4250"/></svg>
<svg class="a" style="left:12.0px;top:1764.0px" width="32" height="32" viewBox="0 0 32 32"><path d="M3 2V32M29 2V32" stroke="#dedede" stroke-width="2"/><path d="M6 7H26" stroke="#dedede" stroke-width="1.6"/><path d="M0 0L-5.6 -3.0L-5.6 3.0Z" fill="#dedede" transform="translate(27 7) rotate(0)"/><path d="M0 0L-5.6 -3.0L-5.6 3.0Z" fill="#dedede" transform="translate(5 7) rotate(180)"/><path d="M10 28L14 25M16 17V22M22 28L18 25M7 22L11 23" stroke="#f2cd78" stroke-width="2.4"/></svg>
<svg class="a" style="left:72.0px;top:1764.0px" width="32" height="32" viewBox="0 0 32 32"><path d="M3 16V30M29 16V30M5 24H27" stroke="#dedede" stroke-width="2"/><path d="M0 0L-5.6 -3.0L-5.6 3.0Z" fill="#dedede" transform="translate(28 24) rotate(0)"/><path d="M0 0L-5.6 -3.0L-5.6 3.0Z" fill="#dedede" transform="translate(4 24) rotate(180)"/><path d="M30 3L22 12" stroke="#f0f0f0" stroke-width="3"/><path d="M22 11C18 12 16 15 15 19C20 19 23 17 24 14Z" fill="#c79a63"/></svg>
<svg class="a" style="left:132.0px;top:1764.0px" width="32" height="32" viewBox="0 0 32 32"><path d="M3 2V32M29 2V32" stroke="#dedede" stroke-width="2"/><path d="M6 9H26" stroke="#82bdf3" stroke-width="2"/><path d="M0 0L-5.6 -3.0L-5.6 3.0Z" fill="#82bdf3" transform="translate(28 9) rotate(0)"/><path d="M0 0L-5.6 -3.0L-5.6 3.0Z" fill="#82bdf3" transform="translate(4 9) rotate(180)"/><path d="M38 30 V38 H30 Z" fill="#a4a7ab"/></svg>
<svg class="a" style="left:12.0px;top:1828.0px" width="32" height="32" viewBox="0 0 32 32"><path d="M1 6V33M15.3 6V33M29.7 6V33" stroke="#dedede" stroke-width="2"/><path d="M4 11H12.5M18 11H27" stroke="#82bdf3" stroke-width="2"/><path d="M0 0L-4.8999999999999995 -2.625L-4.8999999999999995 2.625Z" fill="#82bdf3" transform="translate(3 11) rotate(180)"/><path d="M0 0L-4.8999999999999995 -2.625L-4.8999999999999995 2.625Z" fill="#82bdf3" transform="translate(13.3 11) rotate(0)"/><path d="M0 0L-4.8999999999999995 -2.625L-4.8999999999999995 2.625Z" fill="#82bdf3" transform="translate(17.3 11) rotate(180)"/><path d="M0 0L-4.8999999999999995 -2.625L-4.8999999999999995 2.625Z" fill="#82bdf3" transform="translate(27.7 11) rotate(0)"/><circle cx="35.5" cy="-4.5" r="9.5" fill="#e4773e" stroke="#f4f4f4" stroke-width="1.6"/><path d="M38 30 V38 H30 Z" fill="#a4a7ab"/></svg>
<svg class="a" style="left:72.0px;top:1828.0px" width="32" height="32" viewBox="0 0 32 32"><circle cx="16" cy="16" r="12" fill="none" stroke="#dedede" stroke-width="2"/><path d="M16 0V32M0 16H32" stroke="#82bdf3" stroke-width="2" stroke-dasharray="5 3 3 3"/><circle cx="35.5" cy="-4.5" r="9.5" fill="#e4773e" stroke="#f4f4f4" stroke-width="1.6"/><path d="M38 30 V38 H30 Z" fill="#a4a7ab"/></svg>
<svg class="a" style="left:132.0px;top:1828.0px" width="32" height="32" viewBox="0 0 32 32"><rect x="1" y="3" width="31" height="24" fill="none" stroke="#dedede" stroke-width="2"/><path d="M16 3V27" stroke="#dedede" stroke-width="2"/><circle cx="8.5" cy="15" r="4.5" fill="none" stroke="#f0f0f0" stroke-width="2"/><path d="M8.5 8V22M2 15H15" stroke="#f0f0f0" stroke-width="1.8"/><text x="19" y="24" font-family="Liberation Sans" font-size="16" fill="#f0f0f0" font-weight="normal">.1</text></svg>
<svg class="a" style="left:12.0px;top:1892.0px" width="32" height="32" viewBox="0 0 32 32"><path d="M14 0V30M7 30H21" stroke="#dedede" stroke-width="2"/><path d="M14 28L9 20H19Z" fill="#dedede"/><path d="M1 13H7M14 13H23" stroke="#82bdf3" stroke-width="2"/><path d="M29 13L21 8V18Z" fill="#82bdf3"/><path d="M29 6V20" stroke="#dedede" stroke-width="2"/></svg>
<svg class="a" style="left:72.0px;top:1892.0px" width="32" height="32" viewBox="0 0 32 32"><path d="M3 2V32M29 2V32" stroke="#dedede" stroke-width="2"/><path d="M6 7H26" stroke="#dedede" stroke-width="1.6"/><path d="M0 0L-5.6 -3.0L-5.6 3.0Z" fill="#dedede" transform="translate(27 7) rotate(0)"/><path d="M0 0L-5.6 -3.0L-5.6 3.0Z" fill="#dedede" transform="translate(5 7) rotate(180)"/><path d="M10 21L14 25L22 17" fill="none" stroke="#7ccf8c" stroke-width="3.5"/></svg>
<svg class="a" style="left:132.0px;top:1892.0px" width="32" height="32" viewBox="0 0 32 32"><path d="M3 4H29M3 28H29" stroke="#dedede" stroke-width="2"/><path d="M0 0L-5.6 -3.0L-5.6 3.0Z" fill="#dedede" transform="translate(31 4) rotate(0)"/><path d="M0 0L-5.6 -3.0L-5.6 3.0Z" fill="#dedede" transform="translate(1 4) rotate(180)"/><path d="M0 0L-5.6 -3.0L-5.6 3.0Z" fill="#dedede" transform="translate(31 28) rotate(0)"/><path d="M0 0L-5.6 -3.0L-5.6 3.0Z" fill="#dedede" transform="translate(1 28) rotate(180)"/><rect x="12" y="8" width="8" height="16" fill="#f2cd78"/><path d="M12 11H15M12 14H15M12 17H15M12 20H15" stroke="#3c4250" stroke-width="1.2"/></svg>
<svg class="a" style="left:12.0px;top:1956.0px" width="32" height="32" viewBox="0 0 32 32"><path d="M1 10L10 2M17 30L26 22M7 7L20 24" stroke="#dedede" stroke-width="2"/><path d="M0 0L-4.8999999999999995 -2.625L-4.8999999999999995 2.625Z" fill="#dedede" transform="translate(6 6) rotate(-125)"/><path d="M0 0L-4.8999999999999995 -2.625L-4.8999999999999995 2.625Z" fill="#dedede" transform="translate(21 25) rotate(55)"/><text x="18" y="15" font-family="Liberation Sans" font-size="15" fill="#82bdf3" font-weight="normal">x</text><path d="M38 30 V38 H30 Z" fill="#a4a7ab"/></svg>
<div class="a sep" style="top:2014px"></div>
<div class="a tri" style="top:2036px"></div>
<div class="a hdr" style="top:2026px">Leader</div>
<svg class="a" style="left:146.0px;top:2027.0px" width="24" height="24" viewBox="0 0 24 24"><rect x="9.7" y="3" width="4.6" height="5" fill="#eeeeee" transform="rotate(0 12 12)"/><rect x="9.7" y="3" width="4.6" height="5" fill="#eeeeee" transform="rotate(45 12 12)"/><rect x="9.7" y="3" width="4.6" height="5" fill="#eeeeee" transform="rotate(90 12 12)"/><rect x="9.7" y="3" width="4.6" height="5" fill="#eeeeee" transform="rotate(135 12 12)"/><rect x="9.7" y="3" width="4.6" height="5" fill="#eeeeee" transform="rotate(180 12 12)"/><rect x="9.7" y="3" width="4.6" height="5" fill="#eeeeee" transform="rotate(225 12 12)"/><rect x="9.7" y="3" width="4.6" height="5" fill="#eeeeee" transform="rotate(270 12 12)"/><rect x="9.7" y="3" width="4.6" height="5" fill="#eeeeee" transform="rotate(315 12 12)"/><circle cx="12" cy="12" r="6.2" fill="#eeeeee"/><circle cx="12" cy="12" r="2.4" fill="#3c4250"/></svg>
<svg class="a" style="left:12.0px;top:2071.0px" width="32" height="32" viewBox="0 0 32 32"><path d="M3 29L10 17H17" fill="none" stroke="#dedede" stroke-width="2"/><path d="M0 32L2 23L8 28Z" fill="#dedede"/><circle cx="21" cy="16" r="6" fill="none" stroke="#dedede" stroke-width="2"/><circle cx="28" cy="5.5" r="10" fill="#e4773e" stroke="#f4f4f4" stroke-width="1.6"/></svg>
<svg class="a" style="left:72.0px;top:2071.0px" width="32" height="32" viewBox="0 0 32 32"><path d="M3 29L10 17H17" fill="none" stroke="#dedede" stroke-width="2"/><path d="M0 32L2 23L8 28Z" fill="#dedede"/><circle cx="24" cy="14" r="6" fill="none" stroke="#dedede" stroke-width="2"/><path d="M31 20L25 27" stroke="#f0f0f0" stroke-width="3"/><path d="M25 26C21 27 19 29 18 32C23 32 25 30 26 28Z" fill="#c79a63"/></svg>
<svg class="a" style="left:132.0px;top:2071.0px" width="32" height="32" viewBox="0 0 32 32"><path d="M0 7H16M8 0V14" stroke="#7ccf8c" stroke-width="3.5"/><path d="M10 16H19L22 14" fill="none" stroke="#dedede" stroke-width="2"/><path d="M16 16L8 30M16 16L25 30" stroke="#dedede" stroke-width="2"/><path d="M7 32L7 24L12 27Z M26 32L21 28L26 24Z" fill="#dedede"/><circle cx="27" cy="12" r="4" fill="none" stroke="#dedede" stroke-width="2"/></svg>
<svg class="a" style="left:24.0px;top:2117.0px" width="32" height="32" viewBox="0 0 32 32"><path d="M16 6V32M4 19H28" stroke="#dedede" stroke-width="2"/></svg>
<svg class="a" style="left:84.0px;top:2117.0px" width="32" height="32" viewBox="0 0 32 32"><path d="M6 10H28M6 16H28" stroke="#dedede" stroke-width="2.5"/><rect x="5" y="21" width="18" height="5" fill="#dedede"/><path d="M24 26L28 21L32 26Z" fill="#dedede"/><path d="M6 31H28" stroke="#dedede" stroke-width="3"/></svg>
<svg class="a" style="left:206px;top:141px" width="17" height="17"><path d="M8.5 1V16M1 8.5H16" stroke="#9d9d9d" stroke-width="2"/></svg>
<div class="a" style="left:245px;top:132px;width:3px;height:28px;background:#9a9a9a"></div>
<div class="a" style="left:317px;top:132px;width:3px;height:28px;background:#9a9a9a"></div>
<div class="a" style="left:258px;top:134px;font-size:24px;font-weight:bold;color:#9c9c9c;white-space:nowrap">Top</div>
<div class="a" style="left:331px;top:134px;font-size:24px;font-weight:bold;color:#9c9c9c;white-space:nowrap">2D Wireframe</div>
<svg class="a" style="left:1424px;top:603px" width="637" height="637" viewBox="0 0 637 637"><rect width="637" height="637" fill="#ffffff"/><rect x="79.62" y="0.00" width="79.92" height="79.92" fill="#e93323"/><rect x="238.88" y="0.00" width="79.92" height="79.92" fill="#e93323"/><rect x="398.12" y="0.00" width="79.92" height="79.92" fill="#e93323"/><rect x="557.38" y="0.00" width="79.92" height="79.92" fill="#e93323"/><rect x="0.00" y="79.62" width="79.92" height="79.92" fill="#e93323"/><rect x="159.25" y="79.62" width="79.92" height="79.92" fill="#e93323"/><rect x="318.50" y="79.62" width="79.92" height="79.92" fill="#e93323"/><rect x="477.75" y="79.62" width="79.92" height="79.92" fill="#e93323"/><rect x="79.62" y="159.25" width="79.92" height="79.92" fill="#e93323"/><rect x="238.88" y="159.25" width="79.92" height="79.92" fill="#e93323"/><rect x="398.12" y="159.25" width="79.92" height="79.92" fill="#e93323"/><rect x="557.38" y="159.25" width="79.92" height="79.92" fill="#e93323"/><rect x="0.00" y="238.88" width="79.92" height="79.92" fill="#e93323"/><rect x="159.25" y="238.88" width="79.92" height="79.92" fill="#e93323"/><rect x="318.50" y="238.88" width="79.92" height="79.92" fill="#e93323"/><rect x="477.75" y="238.88" width="79.92" height="79.92" fill="#e93323"/><rect x="79.62" y="318.50" width="79.92" height="79.92" fill="#e93323"/><rect x="238.88" y="318.50" width="79.92" height="79.92" fill="#e93323"/><rect x="398.12" y="318.50" width="79.92" height="79.92" fill="#e93323"/><rect x="557.38" y="318.50" width="79.92" height="79.92" fill="#e93323"/><rect x="0.00" y="398.12" width="79.92" height="79.92" fill="#e93323"/><rect x="159.25" y="398.12" width="79.92" height="79.92" fill="#e93323"/><rect x="318.50" y="398.12" width="79.92" height="79.92" fill="#e93323"/><rect x="477.75" y="398.12" width="79.92" height="79.92" fill="#e93323"/><rect x="79.62" y="477.75" width="79.92" height="79.92" fill="#e93323"/><rect x="238.88" y="477.75" width="79.92" height="79.92" fill="#e93323"/><rect x="398.12" y="477.75" width="79.92" height="79.92" fill="#e93323"/><rect x="557.38" y="477.75" width="79.92" height="79.92" fill="#e93323"/><rect x="0.00" y="557.38" width="79.92" height="79.92" fill="#e93323"/><rect x="159.25" y="557.38" width="79.92" height="79.92" fill="#e93323"/><rect x="318.50" y="557.38" width="79.92" height="79.92" fill="#e93323"/><rect x="477.75" y="557.38" width="79.92" height="79.92" fill="#e93323"/></svg>
<div class="a" style="left:1423px;top:603px;width:1.6px;height:637px;background:#d8d8d8"></div>
<div class="a" style="left:1415px;top:1229px;width:20px;height:20px;border:1.8px solid #eeeeee"></div>
<div class="a" style="left:1424px;top:1238px;width:102px;height:3px;background:#e8e8e8"></div>
<svg class="a" style="left:3080px;top:130px" width="330" height="370" viewBox="3080 130 330 370"><circle cx="3242" cy="286" r="107.5" fill="none" stroke="#3a3f47" stroke-width="33"/><circle cx="3242" cy="286" r="107.5" fill="none" stroke="#474d56" stroke-width="29"/><rect x="3190.5" y="234.5" width="103" height="103" fill="#a9abae"/><rect x="3209.5" y="254" width="64.5" height="64" fill="#a0a3a9"/><text x="3242" y="297" text-anchor="middle" font-family="Liberation Sans" font-weight="bold" font-size="31" fill="#4a505e" transform="translate(3242 0) scale(0.72 1) translate(-3242 0)">TOP</text><g font-family="Liberation Sans" font-weight="bold" fill="#a8a9ac" text-anchor="middle"><text x="3242" y="192" font-size="51" transform="translate(3242 0) scale(0.92 1) translate(-3242 0)">N</text><text x="3129" y="302.5" font-size="47" transform="translate(3129 0) scale(0.97 1) translate(-3129 0)">W</text><text x="3355" y="303.5" font-size="51" transform="translate(3355 0) scale(0.93 1) translate(-3355 0)">E</text><text x="3242" y="416" font-size="49" transform="translate(3242 0) scale(0.92 1) translate(-3242 0)">S</text></g><rect x="3192" y="464" width="100" height="24" rx="8" fill="#6d747e"/><text x="3201" y="484" font-family="Liberation Sans" font-size="21" fill="#262b35">WCS</text><path d="M3265 471H3282L3273.5 480Z" fill="#9aa5ae" stroke="#262b35" stroke-width="1.4"/></svg>
<div class="a" style="left:3406px;top:126px;width:48px;height:42px;background:#394353"></div>
<svg class="a" style="left:3421px;top:140px" width="16" height="12"><path d="M7 1L2 6L7 11M14 1L9 6L14 11" fill="none" stroke="#c0c3c8" stroke-width="1.5"/></svg>
<div class="a" style="left:3409px;top:168px;width:45px;height:1937px;background:#2f3441"></div>
<div class="a" style="left:3409px;top:812px;width:45px;height:3px;background:#262b34"></div>
<div class="a" style="left:3409px;top:1459px;width:45px;height:3px;background:#262b34"></div>
<div class="a vt" style="left:3412px;top:620.5px;height:30px;line-height:30px">Layers and Properties</div>
<div class="a vt" style="left:3412px;top:1253px;height:30px;line-height:30px">Reference Manager</div>
<div class="a vt" style="left:3412px;top:1821px;height:30px;line-height:30px">Blocks</div>
<div class="a" style="left:1372px;top:1748px;width:919px;height:310px;background:#394353"></div>
<div class="a" style="left:1293px;top:2058px;width:998px;height:50px;background:#394353"></div>
<div class="a" style="left:1293px;top:2108px;width:998px;height:2px;background:#252a33"></div>
<div class="a cl" style="top:1758.0px">Select objects:</div>
<div class="a cl" style="top:1788.2px">Command: solid</div>
<div class="a cl" style="top:1818.3px">Specify first point: 0,0</div>
<div class="a cl" style="top:1848.5px">Specify second point: 1,0</div>
<div class="a cl" style="top:1878.6px">Specify third point: 0,1</div>
<div class="a cl" style="top:1908.8px">Specify fourth point or &lt;exit&gt;: 1,1</div>
<div class="a cl" style="top:1938.9px">Specify third point:</div>
<div class="a cl" style="top:1969.0px">Command: copy</div>
<div class="a cl" style="top:1999.2px">Select objects: last</div>
<div class="a cl" style="top:2029.3px">1 found</div>
<div class="a" style="left:2272px;top:1849px;width:9px;height:39px;border-radius:4px;background:#a3a7ae"></div>
<svg class="a" style="left:1307px;top:2066px" width="50" height="30"><path d="M2 7L11 12L2 17" fill="none" stroke="#c9ccd0" stroke-width="1.8"/><path d="M17 23H29" stroke="#c9ccd0" stroke-width="2"/><path d="M34 11H46L40 18Z" fill="#c9ccd0"/></svg>
<div class="a" style="left:1382px;top:2069px;font-size:23px;font-style:italic;color:#9a9ea6;white-space:nowrap">Type a command</div>
<svg class="a" style="left:2207px;top:2078px" width="18" height="10"><path d="M1 1H17L9 9Z" fill="#9a9ea6"/></svg>
<svg class="a" style="left:2244px;top:2066px" width="30" height="32"><path d="M2 12V29H27V12H21M8 12H2" fill="none" stroke="#d5d7da" stroke-width="2"/><path d="M15 6V24" stroke="#d5d7da" stroke-width="2"/><path d="M15 3V18" stroke="#82bdf3" stroke-width="2"/><path d="M10 8L15 2L20 8Z" fill="#82bdf3"/></svg>
<div class="a" style="left:178px;top:2110px;width:3272px;height:34px;background:linear-gradient(#3c4556,#384152)"></div>
<div class="a" style="left:180px;top:2110px;width:118px;height:34px;background:linear-gradient(90deg,#4b5569,#525d72)"></div>
<div class="a" style="left:300px;top:2110px;width:44px;height:34px;background:#3d4556"></div>
<div class="a" style="left:346px;top:2110px;width:116px;height:34px;background:#3c4455"></div>
<div class="a" style="left:464px;top:2110px;width:116px;height:34px;background:#3c4455"></div>
<div class="a" style="left:178px;top:2110px;width:2px;height:34px;background:#2a303a"></div>
<div class="a" style="left:298px;top:2110px;width:2px;height:34px;background:#2a303a"></div>
<div class="a" style="left:344px;top:2110px;width:2px;height:34px;background:#2a303a"></div>
<div class="a" style="left:462px;top:2110px;width:2px;height:34px;background:#2a303a"></div>
<div class="a" style="left:580px;top:2110px;width:2px;height:34px;background:#2a303a"></div>
<div class="a" style="left:2449px;top:2110px;width:2px;height:34px;background:#2a303a"></div>
<div class="a" style="left:204px;top:2120px;font-size:22px;font-weight:bold;color:#f0f0f0;white-space:nowrap">Model</div>
<svg class="a" style="left:310px;top:2120px" width="24" height="24"><path d="M12 1V24M1 12H23" stroke="#e0e0e0" stroke-width="2"/></svg>
<div class="a" style="left:363px;top:2120px;font-size:22px;color:#b3b6bb;white-space:nowrap">Layout1</div>
<div class="a" style="left:480px;top:2120px;font-size:22px;color:#b3b6bb;white-space:nowrap">Layout2</div>
<div class="a" style="left:2469px;top:2118px;font-size:23.4px;color:#c3c5c9;white-space:nowrap">-0.1904, 1.1086 , 0.0000</div>
<div class="a" style="left:2995.5px;top:2112px;width:40px;height:32px;background:#6a8dbf"></div>
<div class="a" style="left:3040px;top:2112px;width:40px;height:32px;background:#6a8dbf"></div>
<div class="a" style="left:3084px;top:2112px;width:40px;height:32px;background:#6a8dbf"></div>
<div class="a" style="left:3128px;top:2112px;width:40px;height:32px;background:#6a8dbf"></div>
<div class="a" style="left:3172px;top:2112px;width:40px;height:32px;background:#6a8dbf"></div>
<svg class="a" style="left:2736px;top:2116px" width="32" height="30" viewBox="0 0 32 30"><path d="M6 0V30M14 0V30M22 0V30M0 6H31M0 14H31M0 22H31" stroke="#d0d0d0" stroke-width="2"/></svg>
<svg class="a" style="left:2784px;top:2116px" width="26" height="30" viewBox="0 0 26 30"><g fill="#d0d0d0"><rect x="0" y="4" width="4" height="4"/><rect x="11" y="4" width="4" height="4"/><rect x="22" y="4" width="4" height="4"/><rect x="0" y="14" width="4" height="4"/><rect x="11" y="14" width="4" height="4"/><rect x="22" y="14" width="4" height="4"/><rect x="0" y="24" width="4" height="4"/><rect x="11" y="24" width="4" height="4"/><rect x="22" y="24" width="4" height="4"/></g></svg>
<svg class="a" style="left:2823px;top:2114px" width="14" height="30" viewBox="0 0 14 30"><path d="M2 0V28M2 20H12V30" fill="none" stroke="#d0d0d0" stroke-width="2"/></svg>
<svg class="a" style="left:2866px;top:2116px" width="36" height="30" viewBox="0 0 36 30"><circle cx="15" cy="20" r="13" fill="none" stroke="#d0d0d0" stroke-width="2"/><path d="M9 18H33M14 18L29 3" stroke="#d0d0d0" stroke-width="2"/></svg>
<svg class="a" style="left:2910px;top:2116px" width="36" height="30" viewBox="0 0 36 30"><path d="M8 0V14M1 7H15" stroke="#d0d0d0" stroke-width="2"/><rect x="12" y="20" width="20" height="10" fill="#d0d0d0"/><rect x="8" y="20" width="4" height="5" fill="#d0d0d0"/></svg>
<svg class="a" style="left:2955px;top:2116px" width="34" height="30" viewBox="0 0 34 30"><path d="M1 3H33" stroke="#d0d0d0" stroke-width="2"/><path d="M1 10H33" stroke="#d0d0d0" stroke-width="3.5"/><path d="M1 19H19" stroke="#d0d0d0" stroke-width="5"/><path d="M1 28H33" stroke="#d0d0d0" stroke-width="2.5"/></svg>
<svg class="a" style="left:2997px;top:2116px" width="32" height="30" viewBox="0 0 32 30"><rect x="6" y="3" width="24" height="27" fill="none" stroke="#eef0f3" stroke-width="2"/><clipPath id="ck"><rect x="8" y="5" width="20" height="25"/></clipPath><g clip-path="url(#ck)" fill="#eef0f3"><rect x="8" y="5" width="4" height="4"/><rect x="8" y="13" width="4" height="4"/><rect x="8" y="21" width="4" height="4"/><rect x="8" y="29" width="4" height="4"/><rect x="12" y="9" width="4" height="4"/><rect x="12" y="17" width="4" height="4"/><rect x="12" y="25" width="4" height="4"/><rect x="16" y="5" width="4" height="4"/><rect x="16" y="13" width="4" height="4"/><rect x="16" y="21" width="4" height="4"/><rect x="16" y="29" width="4" height="4"/><rect x="20" y="9" width="4" height="4"/><rect x="20" y="17" width="4" height="4"/><rect x="20" y="25" width="4" height="4"/><rect x="24" y="5" width="4" height="4"/><rect x="24" y="13" width="4" height="4"/><rect x="24" y="21" width="4" height="4"/><rect x="24" y="29" width="4" height="4"/><rect x="28" y="9" width="4" height="4"/><rect x="28" y="17" width="4" height="4"/><rect x="28" y="25" width="4" height="4"/></g></svg>
<svg class="a" style="left:3045px;top:2116px" width="32" height="30" viewBox="0 0 32 30"><path d="M6 0H2V30H6M16 0H19V14" fill="none" stroke="#eef0f3" stroke-width="2"/><rect x="7" y="4" width="8" height="6.5" fill="#8fa9cf" stroke="#eef0f3" stroke-width="2"/><circle cx="11" cy="19" r="4.2" fill="#8fa9cf" stroke="#eef0f3" stroke-width="2"/><path d="M19 16L28 27H22L24 32H19Z" fill="#eef0f3"/></svg>
<svg class="a" style="left:3085px;top:2116px" width="36" height="30" viewBox="0 0 36 30"><path d="M3 27L26 5M3 27H35" stroke="#eef0f3" stroke-width="2.5"/><rect x="12" y="11" width="6" height="6" fill="#eef0f3" transform="rotate(45 15 14)"/></svg>
<svg class="a" style="left:3132px;top:2116px" width="34" height="30" viewBox="0 0 34 30"><rect x="2" y="2" width="10" height="10" fill="none" stroke="#eef0f3" stroke-width="2"/><path d="M12 7H33V30M7 12V30" fill="none" stroke="#eef0f3" stroke-width="2"/></svg>
<svg class="a" style="left:3176px;top:2116px" width="34" height="30" viewBox="0 0 34 30"><path d="M12 2L20 30H4Z" fill="#eef0f3"/><circle cx="12" cy="27" r="4" fill="#6a8dbf"/><circle cx="27" cy="9" r="5.5" fill="none" stroke="#eef0f3" stroke-width="2.2"/></svg>
<svg class="a" style="left:3220px;top:2116px" width="34" height="30" viewBox="0 0 34 30"><path d="M12 2L20 30H4Z" fill="#d0d0d0"/><circle cx="12" cy="28" r="4" fill="#3a4252"/><path d="M30 1L22 11H27L23 18L32 8H27Z" fill="#d0d0d0"/></svg>
<svg class="a" style="left:3272px;top:2116px" width="30" height="30" viewBox="0 0 30 30"><path d="M12 2L20 30H4Z" fill="#d0d0d0"/><circle cx="12" cy="28" r="4" fill="#3a4252"/></svg>
<div class="a" style="left:3299px;top:2121px;font-size:20px;color:#b8bbc0;white-space:nowrap">1:1</div>
<svg class="a" style="left:3334px;top:2124px" width="14" height="30" viewBox="0 0 14 30"><path d="M1 4H13L7 11Z" fill="#d0d0d0"/></svg>
<svg class="a" style="left:3364px;top:2116px" width="34" height="30" viewBox="0 0 34 30"><rect x="1" y="1" width="13" height="13" fill="none" stroke="#d0d0d0" stroke-width="2"/><circle cx="25" cy="16" r="6" fill="none" stroke="#d0d0d0" stroke-width="2"/><path d="M4 30L12 21L20 30" fill="none" stroke="#d0d0d0" stroke-width="2"/></svg>
<svg class="a" style="left:3408px;top:2116px" width="32" height="30" viewBox="0 0 32 30"><rect x="13" y="1" width="6" height="7" fill="#d0d0d0" transform="rotate(0 16 16)"/><rect x="13" y="1" width="6" height="7" fill="#d0d0d0" transform="rotate(45 16 16)"/><rect x="13" y="1" width="6" height="7" fill="#d0d0d0" transform="rotate(90 16 16)"/><rect x="13" y="1" width="6" height="7" fill="#d0d0d0" transform="rotate(135 16 16)"/><rect x="13" y="1" width="6" height="7" fill="#d0d0d0" transform="rotate(180 16 16)"/><rect x="13" y="1" width="6" height="7" fill="#d0d0d0" transform="rotate(225 16 16)"/><rect x="13" y="1" width="6" height="7" fill="#d0d0d0" transform="rotate(270 16 16)"/><rect x="13" y="1" width="6" height="7" fill="#d0d0d0" transform="rotate(315 16 16)"/><circle cx="16" cy="16" r="11" fill="#d0d0d0"/><circle cx="16" cy="16" r="4.5" fill="#3a4252"/></svg>
</body></html>
